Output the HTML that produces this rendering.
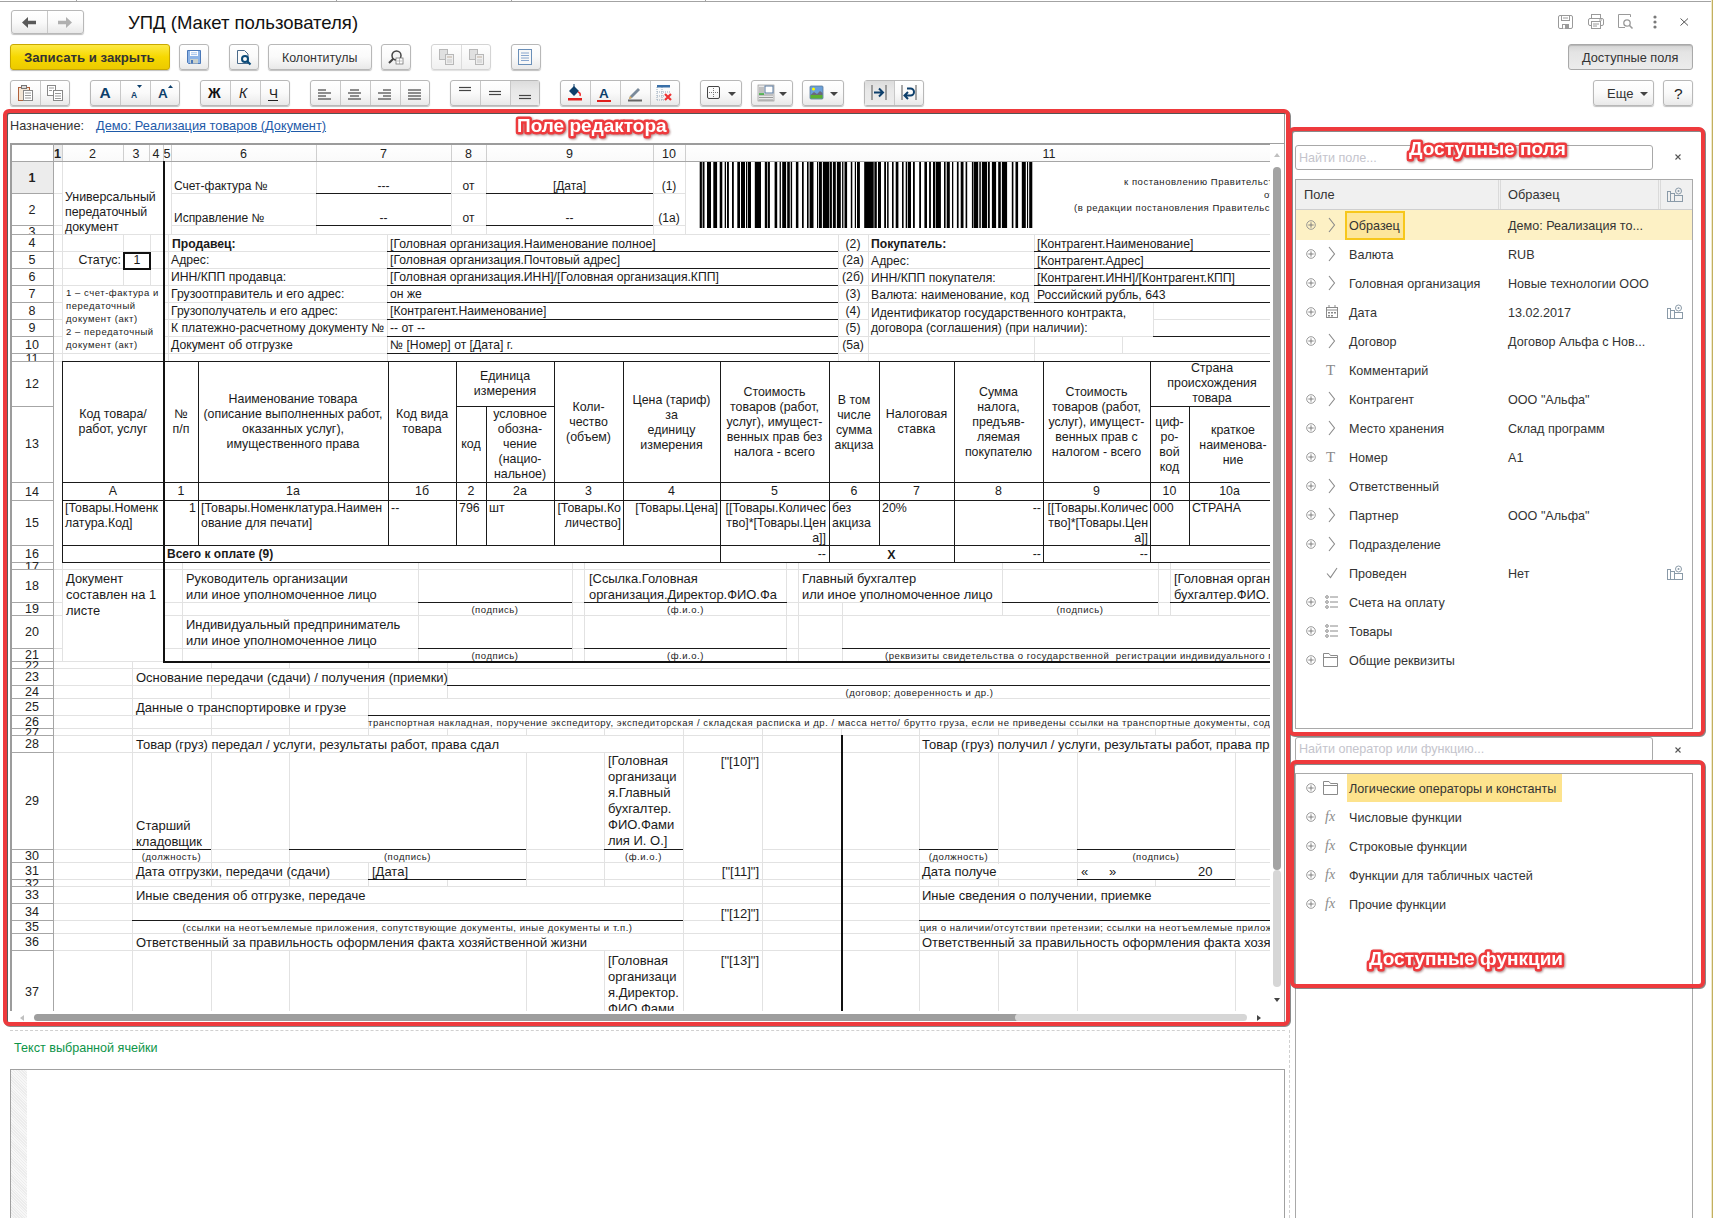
<!DOCTYPE html>
<html><head><meta charset="utf-8"><style>
html,body{margin:0;padding:0;background:#fff;width:1713px;height:1218px;overflow:hidden;position:relative}
div{position:absolute;box-sizing:border-box}
.t{white-space:pre;line-height:1;font-family:"Liberation Sans",sans-serif}
.btn{border:1px solid #b4b4b4;border-radius:2px;background:linear-gradient(#fdfdfd,#ebebeb);box-shadow:0 1px 1px rgba(0,0,0,0.22)}
.lbl{font-family:"Liberation Sans",sans-serif;font-weight:bold;font-size:19px;line-height:1;color:#fff;white-space:pre;
 text-shadow:0 0 1px #e8393d,0 0 1px #e8393d,0 0 2px #e8393d,0 0 2px #e8393d,0 0 2px #e8393d,1px 2px 2px rgba(120,0,0,0.5)}
svg{position:absolute;overflow:visible}
</style></head><body>
<div style="left:0px;top:1px;width:1713px;height:1px;background:#a3a3a3"></div>
<div style="left:76px;top:0px;width:1px;height:1px;background:#a3a3a3"></div>
<div style="left:336px;top:0px;width:1px;height:1px;background:#a3a3a3"></div>
<div style="left:511px;top:0px;width:1px;height:1px;background:#a3a3a3"></div>
<div style="left:705px;top:0px;width:1px;height:1px;background:#a3a3a3"></div>
<div style="left:1711px;top:0px;width:1px;height:1218px;background:#f0e8c8"></div>
<div style="left:1712px;top:0px;width:1px;height:1218px;background:#c2b060"></div>
<div style="left:11px;top:10px;width:73px;height:24px;border:1px solid #b8b8b8;border-radius:3px;background:linear-gradient(#ffffff,#fafafa 50%,#e9e9e9);box-shadow:0 1px 1px rgba(0,0,0,0.25);"></div>
<div style="left:47px;top:11px;width:1px;height:22px;background:#c8c8c8"></div>
<svg style="left:22px;top:17px" width="14" height="11" viewBox="0 0 14 11"><path d="M0 5.5 L6 0 L6 3.8 L14 3.8 L14 7.2 L6 7.2 L6 11 Z" fill="#595959"/></svg>
<svg style="left:58px;top:17px" width="14" height="11" viewBox="0 0 14 11"><path d="M14 5.5 L8 0 L8 3.8 L0 3.8 L0 7.2 L8 7.2 L8 11 Z" fill="#b0b0b0"/></svg>
<div class="t" style="left:128px;top:13.5px;font-size:18.55px;color:#111;">УПД (Макет пользователя)</div>
<svg style="left:1558px;top:15px" width="15" height="14" viewBox="0 0 15 14"><rect x="0.5" y="0.5" width="14" height="13" rx="1.5" fill="none" stroke="#9a9a9a"/><rect x="3.5" y="0.5" width="8" height="5" fill="none" stroke="#9a9a9a"/><line x1="5" y1="3" x2="10" y2="3" stroke="#9a9a9a"/><rect x="4" y="9" width="7" height="4.5" fill="#9a9a9a"/><rect x="5" y="10" width="2" height="3.5" fill="#fff"/></svg>
<svg style="left:1588px;top:14px" width="16" height="15" viewBox="0 0 16 15"><rect x="3.5" y="0.5" width="9" height="4" fill="none" stroke="#9a9a9a"/><rect x="0.5" y="4.5" width="15" height="7" rx="1.5" fill="none" stroke="#9a9a9a"/><rect x="3.5" y="7.5" width="9" height="7" fill="#fff" stroke="#9a9a9a"/><line x1="5" y1="10" x2="11" y2="10" stroke="#9a9a9a"/><line x1="5" y1="12" x2="9" y2="12" stroke="#9a9a9a"/><line x1="11" y1="6" x2="14" y2="6" stroke="#9a9a9a"/></svg>
<svg style="left:1618px;top:14px" width="16" height="15" viewBox="0 0 16 15"><path d="M12.5 3 V0.5 H0.5 V13.5 H7" fill="none" stroke="#9a9a9a"/><circle cx="9" cy="9" r="3.2" fill="none" stroke="#9a9a9a" stroke-width="1.3"/><line x1="11.3" y1="11.3" x2="14.5" y2="14.5" stroke="#9a9a9a" stroke-width="1.6"/></svg>
<svg style="left:1653px;top:15px" width="4" height="14" viewBox="0 0 4 14"><circle cx="2" cy="2" r="1.6" fill="#7a7a7a"/><circle cx="2" cy="7" r="1.6" fill="#7a7a7a"/><circle cx="2" cy="12" r="1.6" fill="#7a7a7a"/></svg>
<svg style="left:1680px;top:18px" width="9" height="8" viewBox="0 0 9 8"><path d="M0.5 0.5 L8 7.5 M8 0.5 L0.5 7.5" stroke="#555" stroke-width="1"/></svg>
<div style="left:10px;top:44px;width:160px;height:26px;border:1px solid #c9a800;border-radius:3px;background:linear-gradient(#fde945,#f6d800 50%,#ecca00);box-shadow:0 1px 1px rgba(0,0,0,0.25)"></div>
<div class="t" style="left:24px;top:51px;font-size:13.2px;color:#333;font-weight:bold">Записать и закрыть</div>
<div style="left:179px;top:44px;width:30px;height:26px;border:1px solid #b8b8b8;border-radius:3px;background:linear-gradient(#ffffff,#fafafa 50%,#e9e9e9);box-shadow:0 1px 1px rgba(0,0,0,0.25);"></div>
<svg style="left:187px;top:50px" width="14" height="14" viewBox="0 0 14 14"><path d="M0.5 0.5 H13.5 V13.5 H1.5 L0.5 12.5 Z" fill="#8db4e6" stroke="#4a78b8"/><rect x="3" y="1" width="8" height="5" fill="#fff"/><line x1="4" y1="2.8" x2="10" y2="2.8" stroke="#8db4e6" stroke-width="0.8"/><line x1="4" y1="4.6" x2="10" y2="4.6" stroke="#8db4e6" stroke-width="0.8"/><rect x="3" y="9" width="8" height="4.5" fill="#c9d0cc"/><rect x="4" y="10" width="2" height="3.5" fill="#4a78b8"/></svg>
<div style="left:229px;top:44px;width:30px;height:26px;border:1px solid #b8b8b8;border-radius:3px;background:linear-gradient(#ffffff,#fafafa 50%,#e9e9e9);box-shadow:0 1px 1px rgba(0,0,0,0.25);"></div>
<svg style="left:237px;top:50px" width="15" height="15" viewBox="0 0 15 15"><path d="M0.5 0.5 H7.5 L11 4 V13.5 H0.5 Z" fill="#fafafa" stroke="#4a6a8a"/><circle cx="8" cy="9" r="3" fill="none" stroke="#0b4a78" stroke-width="2"/><line x1="10" y1="11" x2="13.5" y2="14.5" stroke="#0b4a78" stroke-width="2.2"/></svg>
<div style="left:268px;top:44px;width:104px;height:26px;border:1px solid #b8b8b8;border-radius:3px;background:linear-gradient(#ffffff,#fafafa 50%,#e9e9e9);box-shadow:0 1px 1px rgba(0,0,0,0.25);"></div>
<div class="t" style="left:282px;top:52px;font-size:12.4px;color:#333;">Колонтитулы</div>
<div style="left:381px;top:44px;width:30px;height:26px;border:1px solid #b8b8b8;border-radius:3px;background:linear-gradient(#ffffff,#fafafa 50%,#e9e9e9);box-shadow:0 1px 1px rgba(0,0,0,0.25);"></div>
<svg style="left:388px;top:50px" width="16" height="15" viewBox="0 0 16 15"><circle cx="8.5" cy="5.5" r="4.5" fill="#f4f4f4" stroke="#444" stroke-width="1.5"/><line x1="5.3" y1="8.7" x2="1" y2="13" stroke="#444" stroke-width="2"/><rect x="8" y="8" width="7" height="6" fill="#fff" stroke="#777" stroke-width="0.8"/><line x1="9" y1="11" x2="14" y2="11" stroke="#999" stroke-width="0.6"/><line x1="11.5" y1="8" x2="11.5" y2="14" stroke="#999" stroke-width="0.6"/></svg>
<div style="left:431px;top:44px;width:60px;height:26px;border:1px solid #d4d4d4;border-radius:3px;background:linear-gradient(#ffffff,#f0f0f0);box-shadow:0 1px 1px rgba(0,0,0,0.12)"></div>
<div style="left:461px;top:45px;width:1px;height:24px;background:#dcdcdc"></div>
<svg style="left:439px;top:49px" width="16" height="16" viewBox="0 0 16 16"><rect x="0.5" y="0.5" width="8" height="10" fill="#e0e0e0" stroke="#b8b8b8"/><rect x="6.5" y="5.5" width="8" height="10" fill="#eee" stroke="#b8b8b8"/><line x1="8" y1="8" x2="13" y2="8" stroke="#c0b0a0"/><line x1="8" y1="11" x2="13" y2="11" stroke="#c8c8c8"/><line x1="8" y1="13" x2="13" y2="13" stroke="#c8c8c8"/></svg>
<svg style="left:469px;top:49px" width="16" height="16" viewBox="0 0 16 16"><rect x="0.5" y="0.5" width="8" height="10" fill="#e0e0e0" stroke="#b8b8b8"/><rect x="6.5" y="5.5" width="8" height="10" fill="#eee" stroke="#b8b8b8"/><line x1="8" y1="8" x2="13" y2="8" stroke="#c0b0a0"/><line x1="8" y1="11" x2="13" y2="11" stroke="#c8c8c8"/><line x1="8" y1="13" x2="13" y2="13" stroke="#c8c8c8"/></svg>
<div style="left:511px;top:44px;width:30px;height:26px;border:1px solid #b8b8b8;border-radius:3px;background:linear-gradient(#ffffff,#fafafa 50%,#e9e9e9);box-shadow:0 1px 1px rgba(0,0,0,0.25);"></div>
<svg style="left:518px;top:49px" width="15" height="16" viewBox="0 0 15 16"><rect x="0.5" y="0.5" width="13" height="15" fill="#f8f8f8" stroke="#6a8fb8"/><g stroke="#7a9cc8" stroke-width="0.9"><line x1="3" y1="4" x2="11" y2="4"/><line x1="3" y1="6.5" x2="11" y2="6.5"/><line x1="3" y1="9" x2="11" y2="9"/><line x1="3" y1="11.5" x2="11" y2="11.5"/></g></svg>
<div style="left:1568px;top:44px;width:125px;height:26px;border:1px solid #a9a9a9;border-radius:3px;background:linear-gradient(#d4d4d4,#e4e4e4 30%,#ececec);box-shadow:inset 0 1px 1px rgba(0,0,0,0.15)"></div>
<div class="t" style="left:1582px;top:52px;font-size:12.75px;color:#333;">Доступные поля</div>
<div style="left:1593px;top:80px;width:61px;height:26px;border:1px solid #b8b8b8;border-radius:3px;background:linear-gradient(#ffffff,#fafafa 50%,#e9e9e9);box-shadow:0 1px 1px rgba(0,0,0,0.25);"></div>
<div class="t" style="left:1607px;top:87px;font-size:13px;color:#333;">Еще</div>
<svg style="left:1640px;top:92px" width="8" height="4" viewBox="0 0 8 4"><path d="M0 0 H8 L4 4 Z" fill="#444"/></svg>
<div style="left:1663px;top:80px;width:30px;height:26px;border:1px solid #b8b8b8;border-radius:3px;background:linear-gradient(#ffffff,#fafafa 50%,#e9e9e9);box-shadow:0 1px 1px rgba(0,0,0,0.25);"></div>
<div class="t" style="left:1674px;top:86px;font-size:15.5px;color:#222;">?</div>
<div style="left:10px;top:80px;width:60px;height:26px;border:1px solid #b8b8b8;border-radius:3px;background:linear-gradient(#ffffff,#fafafa 50%,#e9e9e9);box-shadow:0 1px 1px rgba(0,0,0,0.25);"></div>
<div style="left:40px;top:81px;width:1px;height:24px;background:#c8c8c8"></div>
<svg style="left:18px;top:85px" width="15" height="16" viewBox="0 0 15 16"><rect x="0.5" y="2.5" width="11" height="13" fill="#f3e6d6" stroke="#b0603a"/><rect x="3.5" y="0.5" width="5" height="3" fill="#ddd" stroke="#777"/><rect x="5.5" y="5.5" width="9" height="10" fill="#fff" stroke="#888"/><g stroke="#999"><line x1="7" y1="8" x2="13" y2="8"/><line x1="7" y1="10.5" x2="13" y2="10.5"/><line x1="7" y1="13" x2="13" y2="13"/></g></svg>
<svg style="left:47px;top:85px" width="16" height="16" viewBox="0 0 16 16"><rect x="0.5" y="0.5" width="8" height="10" fill="#fff" stroke="#888"/><rect x="6.5" y="5.5" width="9" height="10" fill="#fff" stroke="#888"/><g stroke="#999"><line x1="2" y1="3" x2="7" y2="3"/><line x1="2" y1="5.5" x2="5" y2="5.5"/><line x1="8" y1="8.5" x2="14" y2="8.5"/><line x1="8" y1="11" x2="14" y2="11"/><line x1="8" y1="13.5" x2="14" y2="13.5"/></g></svg>
<div style="left:90px;top:80px;width:90px;height:26px;border:1px solid #b8b8b8;border-radius:3px;background:linear-gradient(#ffffff,#fafafa 50%,#e9e9e9);box-shadow:0 1px 1px rgba(0,0,0,0.25);"></div>
<div style="left:120px;top:81px;width:1px;height:24px;background:#c8c8c8"></div>
<div style="left:150px;top:81px;width:1px;height:24px;background:#c8c8c8"></div>
<div class="t" style="left:99.5px;top:85px;font-size:15.5px;color:#0d3f6b;font-weight:bold">A</div>
<div class="t" style="left:131px;top:91px;font-size:8.5px;color:#0d3f6b;font-weight:bold">A</div>
<svg style="left:137px;top:85px" width="5" height="3" viewBox="0 0 5 3"><path d="M0 0 H5 L2.5 3 Z" fill="#0d3f6b"/></svg>
<div class="t" style="left:158px;top:87px;font-size:13.5px;color:#0d3f6b;font-weight:bold">A</div>
<svg style="left:167.5px;top:85px" width="5" height="3" viewBox="0 0 5 3"><path d="M0 3 H5 L2.5 0 Z" fill="#0d3f6b"/></svg>
<div style="left:200px;top:80px;width:90px;height:26px;border:1px solid #b8b8b8;border-radius:3px;background:linear-gradient(#ffffff,#fafafa 50%,#e9e9e9);box-shadow:0 1px 1px rgba(0,0,0,0.25);"></div>
<div style="left:230px;top:81px;width:1px;height:24px;background:#c8c8c8"></div>
<div style="left:260px;top:81px;width:1px;height:24px;background:#c8c8c8"></div>
<div class="t" style="left:208px;top:86px;font-size:14px;color:#111;font-weight:bold">Ж</div>
<div class="t" style="left:239px;top:86px;font-size:14px;color:#222;font-style:italic">К</div>
<div class="t" style="left:269px;top:87px;font-size:13.5px;color:#222;">Ч</div>
<div style="left:268px;top:99.5px;width:10px;height:1px;background:#222"></div>
<div style="left:310px;top:80px;width:120px;height:26px;border:1px solid #b8b8b8;border-radius:3px;background:linear-gradient(#ffffff,#fafafa 50%,#e9e9e9);box-shadow:0 1px 1px rgba(0,0,0,0.25);"></div>
<div style="left:340px;top:81px;width:1px;height:24px;background:#c8c8c8"></div>
<div style="left:370px;top:81px;width:1px;height:24px;background:#c8c8c8"></div>
<div style="left:400px;top:81px;width:1px;height:24px;background:#c8c8c8"></div>
<svg style="left:318px;top:86px" width="14" height="14" viewBox="0 0 14 14"><line x1="0" y1="4" x2="8" y2="4" stroke="#444" stroke-width="1.2"/><line x1="0" y1="7" x2="13" y2="7" stroke="#444" stroke-width="1.2"/><line x1="0" y1="10" x2="8" y2="10" stroke="#444" stroke-width="1.2"/><line x1="0" y1="13" x2="13" y2="13" stroke="#444" stroke-width="1.2"/></svg>
<svg style="left:348px;top:86px" width="14" height="14" viewBox="0 0 14 14"><line x1="2" y1="4" x2="11" y2="4" stroke="#444" stroke-width="1.2"/><line x1="0" y1="7" x2="13" y2="7" stroke="#444" stroke-width="1.2"/><line x1="2" y1="10" x2="11" y2="10" stroke="#444" stroke-width="1.2"/><line x1="0" y1="13" x2="13" y2="13" stroke="#444" stroke-width="1.2"/></svg>
<svg style="left:378px;top:86px" width="14" height="14" viewBox="0 0 14 14"><line x1="5" y1="4" x2="13" y2="4" stroke="#444" stroke-width="1.2"/><line x1="0" y1="7" x2="13" y2="7" stroke="#444" stroke-width="1.2"/><line x1="5" y1="10" x2="13" y2="10" stroke="#444" stroke-width="1.2"/><line x1="0" y1="13" x2="13" y2="13" stroke="#444" stroke-width="1.2"/></svg>
<svg style="left:408px;top:86px" width="14" height="14" viewBox="0 0 14 14"><line x1="0" y1="4" x2="13" y2="4" stroke="#444" stroke-width="1.2"/><line x1="0" y1="7" x2="13" y2="7" stroke="#444" stroke-width="1.2"/><line x1="0" y1="10" x2="13" y2="10" stroke="#444" stroke-width="1.2"/><line x1="0" y1="13" x2="13" y2="13" stroke="#444" stroke-width="1.2"/></svg>
<div style="left:450px;top:80px;width:90px;height:26px;border:1px solid #b8b8b8;border-radius:3px;background:linear-gradient(#ffffff,#fafafa 50%,#e9e9e9);box-shadow:0 1px 1px rgba(0,0,0,0.25);"></div>
<div style="left:511px;top:81px;width:28px;height:24px;background:linear-gradient(#dcdcdc,#e8e8e8 40%,#ececec)"></div>
<div style="left:480px;top:81px;width:1px;height:24px;background:#c8c8c8"></div>
<div style="left:510px;top:81px;width:1px;height:24px;background:#c8c8c8"></div>
<svg style="left:458px;top:85px" width="14" height="16" viewBox="0 0 14 16"><line x1="1" y1="2.5" x2="13" y2="2.5" stroke="#444" stroke-width="1.2"/><line x1="1" y1="5.5" x2="13" y2="5.5" stroke="#444" stroke-width="1.2"/></svg>
<svg style="left:488px;top:85px" width="14" height="16" viewBox="0 0 14 16"><line x1="1" y1="6.5" x2="13" y2="6.5" stroke="#444" stroke-width="1.2"/><line x1="1" y1="9.5" x2="13" y2="9.5" stroke="#444" stroke-width="1.2"/></svg>
<svg style="left:518px;top:85px" width="14" height="16" viewBox="0 0 14 16"><line x1="1" y1="10.5" x2="13" y2="10.5" stroke="#444" stroke-width="1.2"/><line x1="1" y1="13.5" x2="13" y2="13.5" stroke="#444" stroke-width="1.2"/></svg>
<div style="left:560px;top:80px;width:120px;height:26px;border:1px solid #b8b8b8;border-radius:3px;background:linear-gradient(#ffffff,#fafafa 50%,#e9e9e9);box-shadow:0 1px 1px rgba(0,0,0,0.25);"></div>
<div style="left:590px;top:81px;width:1px;height:24px;background:#c8c8c8"></div>
<div style="left:620px;top:81px;width:1px;height:24px;background:#c8c8c8"></div>
<div style="left:650px;top:81px;width:1px;height:24px;background:#c8c8c8"></div>
<svg style="left:567px;top:84px" width="16" height="18" viewBox="0 0 16 18"><path d="M2 7 L7 2 L12 7 L7 12 Z" fill="#0d3f6b"/><line x1="7" y1="0" x2="7" y2="5" stroke="#0d3f6b"/><path d="M11 8 Q14 9 13 12" fill="none" stroke="#e33" stroke-width="1.5"/><rect x="1" y="14" width="14" height="2.5" fill="#e0201e"/></svg>
<div class="t" style="left:599px;top:87px;font-size:13.5px;color:#0d3f6b;font-weight:bold">A</div>
<div style="left:597px;top:100px;width:14px;height:2px;background:#e0201e"></div>
<svg style="left:627px;top:85px" width="16" height="17" viewBox="0 0 16 17"><path d="M3 11 L11 3 L13 5 L5 13 L2 14 Z" fill="#7a8a9a"/><path d="M3 11 L5 13 L2 14 Z" fill="#e0b060"/><rect x="1" y="14.5" width="14" height="2" fill="#666"/></svg>
<svg style="left:656px;top:84px" width="17" height="18" viewBox="0 0 17 18"><g stroke="#9ab" stroke-width="1" stroke-dasharray="1,1"><line x1="1" y1="3" x2="1" y2="16"/><line x1="6" y1="3" x2="6" y2="16"/><line x1="1" y1="8" x2="14" y2="8"/><line x1="1" y1="12" x2="8" y2="12"/><line x1="1" y1="16" x2="8" y2="16"/></g><rect x="1" y="1" width="13" height="2.5" fill="#3a70a8"/><path d="M9 10 L15 16 M15 10 L9 16" stroke="#e33" stroke-width="2.2"/></svg>
<div style="left:700px;top:80px;width:42px;height:26px;border:1px solid #b8b8b8;border-radius:3px;background:linear-gradient(#ffffff,#fafafa 50%,#e9e9e9);box-shadow:0 1px 1px rgba(0,0,0,0.25);"></div>
<svg style="left:707px;top:86px" width="13" height="13" viewBox="0 0 13 13"><rect x="0.5" y="0.5" width="12" height="12" rx="1.5" fill="none" stroke="#444"/><g stroke="#777" stroke-dasharray="1,1"><line x1="6.5" y1="2" x2="6.5" y2="11"/><line x1="2" y1="6.5" x2="11" y2="6.5"/></g></svg>
<svg style="left:728px;top:92px" width="8" height="4" viewBox="0 0 8 4"><path d="M0 0 H8 L4 4 Z" fill="#444"/></svg>
<div style="left:751px;top:80px;width:42px;height:26px;border:1px solid #b8b8b8;border-radius:3px;background:linear-gradient(#ffffff,#fafafa 50%,#e9e9e9);box-shadow:0 1px 1px rgba(0,0,0,0.25);"></div>
<svg style="left:758px;top:85px" width="16" height="16" viewBox="0 0 16 16"><rect x="0" y="0" width="16" height="16" fill="#e8e8e8" stroke="#888" stroke-width="0.6"/><rect x="7" y="1" width="8" height="7" fill="#fff" stroke="#5a7aa0"/><g stroke="#999"><line x1="1" y1="3" x2="6" y2="3"/><line x1="1" y1="5" x2="6" y2="5"/><line x1="1" y1="7" x2="6" y2="7"/><line x1="1" y1="10" x2="15" y2="10"/><line x1="1" y1="12.5" x2="15" y2="12.5"/><line x1="1" y1="15" x2="15" y2="15"/></g><line x1="1" y1="9" x2="6" y2="9" stroke="#3a3" stroke-width="1.5"/></svg>
<svg style="left:779px;top:92px" width="8" height="4" viewBox="0 0 8 4"><path d="M0 0 H8 L4 4 Z" fill="#444"/></svg>
<div style="left:802px;top:80px;width:42px;height:26px;border:1px solid #b8b8b8;border-radius:3px;background:linear-gradient(#ffffff,#fafafa 50%,#e9e9e9);box-shadow:0 1px 1px rgba(0,0,0,0.25);"></div>
<svg style="left:810px;top:86px" width="13" height="13" viewBox="0 0 13 13"><rect x="0" y="0" width="13" height="13" rx="1" fill="#6aa0d8" stroke="#5a7a9a" stroke-width="0.8"/><rect x="0.5" y="9" width="12" height="3.5" fill="#5cb030"/><path d="M0.5 9 L4 6 L7 8 L10 5 L12.5 7 V9 Z" fill="#6a6a7a"/><circle cx="3.5" cy="3" r="1.5" fill="#ff0"/></svg>
<svg style="left:830px;top:92px" width="8" height="4" viewBox="0 0 8 4"><path d="M0 0 H8 L4 4 Z" fill="#444"/></svg>
<div style="left:864px;top:80px;width:60px;height:26px;border:1px solid #b8b8b8;border-radius:3px;background:linear-gradient(#ffffff,#fafafa 50%,#e9e9e9);box-shadow:0 1px 1px rgba(0,0,0,0.25);"></div>
<div style="left:865px;top:81px;width:29px;height:24px;background:linear-gradient(#dcdcdc,#e8e8e8 40%,#ececec)"></div>
<div style="left:894px;top:81px;width:1px;height:24px;background:#c8c8c8"></div>
<svg style="left:871px;top:85px" width="16" height="15" viewBox="0 0 16 15"><line x1="1" y1="0" x2="1" y2="15" stroke="#555"/><line x1="15" y1="0" x2="15" y2="15" stroke="#555"/><path d="M3 7.5 H12 M8 3.5 L12 7.5 L8 11.5" fill="none" stroke="#0d3f6b" stroke-width="2"/></svg>
<svg style="left:901px;top:85px" width="16" height="15" viewBox="0 0 16 15"><line x1="1" y1="0" x2="1" y2="15" stroke="#555"/><line x1="15" y1="0" x2="15" y2="15" stroke="#555"/><path d="M6 3.5 H9.5 A3.5 3.5 0 0 1 9.5 10.5 H4 M7 7 L3.5 10.5 L7 14" fill="none" stroke="#0d3f6b" stroke-width="2"/></svg>
<div style="left:7px;top:113px;width:1278px;height:910px;border:1px solid #9a9a9a;border-top:1px solid #8a8a8a"></div>
<div class="t" style="left:10px;top:120px;font-size:12.7px;color:#333;">Назначение:</div>
<div class="t" style="left:96px;top:120px;font-size:12.8px;color:#1e5aa8;text-decoration:underline">Демо: Реализация товаров (Документ)</div>
<div style="left:10px;top:1030px;width:1275px;height:0;border-top:1px dashed #d0d0d0"></div>
<div style="left:1289px;top:1030px;width:0;height:188px;border-left:1px dashed #d0d0d0"></div>
<div class="t" style="left:14px;top:1042px;font-size:12.6px;color:#0d9448;">Текст выбранной ячейки</div>
<div style="left:10px;top:1069px;width:1275px;height:160px;border:1px solid #a0a0a0"></div>
<div style="left:11px;top:1070px;width:16px;height:160px;background:repeating-linear-gradient(45deg,#ececec 0 1px,#f7f7f7 1px 2px)"></div>
<div style="left:0;top:0;width:1713px;height:1218px;clip-path:inset(143px 443px 207px 10px)">
<div style="left:62px;top:161px;width:1px;height:73px;background:#e2e2e2"></div>
<div style="left:171px;top:161px;width:1px;height:73px;background:#e2e2e2"></div>
<div style="left:316px;top:161px;width:1px;height:73px;background:#e2e2e2"></div>
<div style="left:451px;top:161px;width:1px;height:73px;background:#e2e2e2"></div>
<div style="left:486px;top:161px;width:1px;height:73px;background:#e2e2e2"></div>
<div style="left:653px;top:161px;width:1px;height:73px;background:#e2e2e2"></div>
<div style="left:685px;top:161px;width:1px;height:73px;background:#e2e2e2"></div>
<div style="left:53px;top:193px;width:9px;height:1px;background:#e2e2e2"></div>
<div style="left:53px;top:225px;width:9px;height:1px;background:#e2e2e2"></div>
<div style="left:171px;top:193px;width:514px;height:1px;background:#e2e2e2"></div>
<div style="left:171px;top:225px;width:514px;height:1px;background:#e2e2e2"></div>
<div style="left:53px;top:234px;width:1217px;height:1px;background:#e2e2e2"></div>
<div style="left:53px;top:251px;width:1217px;height:1px;background:#e2e2e2"></div>
<div style="left:53px;top:268px;width:1217px;height:1px;background:#e2e2e2"></div>
<div style="left:53px;top:285px;width:1217px;height:1px;background:#e2e2e2"></div>
<div style="left:53px;top:302px;width:9px;height:1px;background:#e2e2e2"></div>
<div style="left:164px;top:302px;width:1106px;height:1px;background:#e2e2e2"></div>
<div style="left:53px;top:319px;width:9px;height:1px;background:#e2e2e2"></div>
<div style="left:164px;top:319px;width:704px;height:1px;background:#e2e2e2"></div>
<div style="left:1153px;top:319px;width:117px;height:1px;background:#e2e2e2"></div>
<div style="left:53px;top:336px;width:9px;height:1px;background:#e2e2e2"></div>
<div style="left:164px;top:336px;width:1106px;height:1px;background:#e2e2e2"></div>
<div style="left:53px;top:353px;width:1217px;height:1px;background:#e2e2e2"></div>
<div style="left:53px;top:361px;width:1217px;height:1px;background:#e2e2e2"></div>
<div style="left:62px;top:234px;width:1px;height:127px;background:#e2e2e2"></div>
<div style="left:168px;top:234px;width:1px;height:127px;background:#e2e2e2"></div>
<div style="left:387px;top:234px;width:1px;height:127px;background:#e2e2e2"></div>
<div style="left:838px;top:234px;width:1px;height:127px;background:#e2e2e2"></div>
<div style="left:868px;top:234px;width:1px;height:127px;background:#e2e2e2"></div>
<div style="left:1034px;top:234px;width:1px;height:68px;background:#e2e2e2"></div>
<div style="left:1034px;top:336px;width:1px;height:25px;background:#e2e2e2"></div>
<div style="left:123px;top:234px;width:1px;height:51px;background:#e2e2e2"></div>
<div style="left:150px;top:234px;width:1px;height:51px;background:#e2e2e2"></div>
<div style="left:1122px;top:336px;width:1px;height:17px;background:#e2e2e2"></div>
<div style="left:1153px;top:302px;width:1px;height:34px;background:#e2e2e2"></div>
<div style="left:62px;top:562px;width:1px;height:99px;background:#e2e2e2"></div>
<div style="left:182px;top:562px;width:1px;height:99px;background:#e2e2e2"></div>
<div style="left:418px;top:562px;width:1px;height:99px;background:#e2e2e2"></div>
<div style="left:572px;top:562px;width:1px;height:99px;background:#e2e2e2"></div>
<div style="left:584px;top:562px;width:1px;height:99px;background:#e2e2e2"></div>
<div style="left:786px;top:562px;width:1px;height:99px;background:#e2e2e2"></div>
<div style="left:798px;top:562px;width:1px;height:99px;background:#e2e2e2"></div>
<div style="left:1002px;top:562px;width:1px;height:53px;background:#e2e2e2"></div>
<div style="left:1158px;top:562px;width:1px;height:53px;background:#e2e2e2"></div>
<div style="left:1170px;top:562px;width:1px;height:53px;background:#e2e2e2"></div>
<div style="left:842px;top:602px;width:1px;height:59px;background:#e2e2e2"></div>
<div style="left:53px;top:569px;width:1217px;height:1px;background:#e2e2e2"></div>
<div style="left:53px;top:602px;width:9px;height:1px;background:#e2e2e2"></div>
<div style="left:164px;top:602px;width:1106px;height:1px;background:#e2e2e2"></div>
<div style="left:53px;top:615px;width:9px;height:1px;background:#e2e2e2"></div>
<div style="left:164px;top:615px;width:1106px;height:1px;background:#e2e2e2"></div>
<div style="left:53px;top:648px;width:9px;height:1px;background:#e2e2e2"></div>
<div style="left:164px;top:648px;width:1106px;height:1px;background:#e2e2e2"></div>
<div style="left:53px;top:661px;width:111px;height:1px;background:#e2e2e2"></div>
<div style="left:53px;top:668px;width:1217px;height:1px;background:#e2e2e2"></div>
<div style="left:53px;top:685px;width:1217px;height:1px;background:#e2e2e2"></div>
<div style="left:53px;top:698px;width:1217px;height:1px;background:#e2e2e2"></div>
<div style="left:53px;top:715px;width:1217px;height:1px;background:#e2e2e2"></div>
<div style="left:53px;top:728px;width:1217px;height:1px;background:#e2e2e2"></div>
<div style="left:53px;top:735px;width:1217px;height:1px;background:#e2e2e2"></div>
<div style="left:53px;top:752px;width:1217px;height:1px;background:#e2e2e2"></div>
<div style="left:53px;top:849px;width:1217px;height:1px;background:#e2e2e2"></div>
<div style="left:53px;top:862px;width:1217px;height:1px;background:#e2e2e2"></div>
<div style="left:53px;top:879px;width:1217px;height:1px;background:#e2e2e2"></div>
<div style="left:53px;top:886px;width:1217px;height:1px;background:#e2e2e2"></div>
<div style="left:53px;top:903px;width:1217px;height:1px;background:#e2e2e2"></div>
<div style="left:53px;top:920px;width:1217px;height:1px;background:#e2e2e2"></div>
<div style="left:53px;top:933px;width:1217px;height:1px;background:#e2e2e2"></div>
<div style="left:53px;top:950px;width:1217px;height:1px;background:#e2e2e2"></div>
<div style="left:53px;top:1040px;width:1217px;height:1px;background:#e2e2e2"></div>
<div style="left:132px;top:661px;width:1px;height:91px;background:#e2e2e2"></div>
<div style="left:211px;top:661px;width:1px;height:7px;background:#e2e2e2"></div>
<div style="left:211px;top:685px;width:1px;height:13px;background:#e2e2e2"></div>
<div style="left:211px;top:715px;width:1px;height:20px;background:#e2e2e2"></div>
<div style="left:289px;top:661px;width:1px;height:7px;background:#e2e2e2"></div>
<div style="left:289px;top:685px;width:1px;height:13px;background:#e2e2e2"></div>
<div style="left:289px;top:715px;width:1px;height:20px;background:#e2e2e2"></div>
<div style="left:368px;top:661px;width:1px;height:7px;background:#e2e2e2"></div>
<div style="left:368px;top:685px;width:1px;height:50px;background:#e2e2e2"></div>
<div style="left:447px;top:661px;width:1px;height:37px;background:#e2e2e2"></div>
<div style="left:447px;top:728px;width:1px;height:7px;background:#e2e2e2"></div>
<div style="left:132px;top:728px;width:1px;height:7px;background:#e2e2e2"></div>
<div style="left:211px;top:728px;width:1px;height:7px;background:#e2e2e2"></div>
<div style="left:289px;top:728px;width:1px;height:7px;background:#e2e2e2"></div>
<div style="left:368px;top:728px;width:1px;height:7px;background:#e2e2e2"></div>
<div style="left:447px;top:728px;width:1px;height:7px;background:#e2e2e2"></div>
<div style="left:526px;top:728px;width:1px;height:7px;background:#e2e2e2"></div>
<div style="left:604px;top:728px;width:1px;height:7px;background:#e2e2e2"></div>
<div style="left:683px;top:728px;width:1px;height:7px;background:#e2e2e2"></div>
<div style="left:762px;top:728px;width:1px;height:7px;background:#e2e2e2"></div>
<div style="left:841px;top:728px;width:1px;height:7px;background:#e2e2e2"></div>
<div style="left:919px;top:728px;width:1px;height:7px;background:#e2e2e2"></div>
<div style="left:998px;top:728px;width:1px;height:7px;background:#e2e2e2"></div>
<div style="left:1077px;top:728px;width:1px;height:7px;background:#e2e2e2"></div>
<div style="left:1155px;top:728px;width:1px;height:7px;background:#e2e2e2"></div>
<div style="left:1235px;top:728px;width:1px;height:7px;background:#e2e2e2"></div>
<div style="left:683px;top:735px;width:1px;height:17px;background:#e2e2e2"></div>
<div style="left:762px;top:735px;width:1px;height:17px;background:#e2e2e2"></div>
<div style="left:919px;top:735px;width:1px;height:17px;background:#e2e2e2"></div>
<div style="left:132px;top:752px;width:1px;height:259px;background:#e2e2e2"></div>
<div style="left:211px;top:752px;width:1px;height:259px;background:#e2e2e2"></div>
<div style="left:289px;top:752px;width:1px;height:259px;background:#e2e2e2"></div>
<div style="left:526px;top:752px;width:1px;height:259px;background:#e2e2e2"></div>
<div style="left:604px;top:752px;width:1px;height:259px;background:#e2e2e2"></div>
<div style="left:683px;top:752px;width:1px;height:259px;background:#e2e2e2"></div>
<div style="left:762px;top:752px;width:1px;height:259px;background:#e2e2e2"></div>
<div style="left:919px;top:752px;width:1px;height:259px;background:#e2e2e2"></div>
<div style="left:998px;top:752px;width:1px;height:259px;background:#e2e2e2"></div>
<div style="left:1077px;top:752px;width:1px;height:259px;background:#e2e2e2"></div>
<div style="left:1235px;top:752px;width:1px;height:259px;background:#e2e2e2"></div>
<div style="left:368px;top:862px;width:1px;height:24px;background:#e2e2e2"></div>
<div style="left:447px;top:879px;width:1px;height:7px;background:#e2e2e2"></div>
<div style="left:1155px;top:879px;width:1px;height:7px;background:#e2e2e2"></div>
<div style="left:134px;top:736px;width:549px;height:16px;background:#fff"></div>
<div style="left:921px;top:736px;width:349px;height:16px;background:#fff"></div>
<div style="left:134px;top:887px;width:549px;height:16px;background:#fff"></div>
<div style="left:921px;top:887px;width:349px;height:16px;background:#fff"></div>
<div style="left:134px;top:904px;width:549px;height:16px;background:#fff"></div>
<div style="left:921px;top:904px;width:349px;height:16px;background:#fff"></div>
<div style="left:134px;top:934px;width:549px;height:16px;background:#fff"></div>
<div style="left:921px;top:934px;width:349px;height:16px;background:#fff"></div>
<div style="left:134px;top:921px;width:549px;height:12px;background:#fff"></div>
<div style="left:921px;top:921px;width:349px;height:12px;background:#fff"></div>
<div style="left:684px;top:849px;width:78px;height:1px;background:#fff"></div>
<div style="left:53px;top:144px;width:1217px;height:17px;background:linear-gradient(#fff,#fafafa)"></div>
<div style="left:53px;top:144px;width:9px;height:17px;background:#ececec"></div>
<div style="left:11px;top:161px;width:42px;height:32px;background:#ececec"></div>
<div style="left:10px;top:143px;width:1260px;height:2px;background:#9c9c9c"></div>
<div style="left:10px;top:143px;width:2px;height:868px;background:#9c9c9c"></div>
<div style="left:12px;top:161px;width:1258px;height:1px;background:#a6a6a6"></div>
<div style="left:53px;top:143px;width:1px;height:868px;background:#a6a6a6"></div>
<div style="left:62px;top:145px;width:1px;height:16px;background:#cfcfcf"></div>
<div style="left:123px;top:145px;width:1px;height:16px;background:#cfcfcf"></div>
<div style="left:149px;top:145px;width:1px;height:16px;background:#cfcfcf"></div>
<div style="left:163px;top:145px;width:1px;height:16px;background:#cfcfcf"></div>
<div style="left:171px;top:145px;width:1px;height:16px;background:#cfcfcf"></div>
<div style="left:316px;top:145px;width:1px;height:16px;background:#cfcfcf"></div>
<div style="left:451px;top:145px;width:1px;height:16px;background:#cfcfcf"></div>
<div style="left:486px;top:145px;width:1px;height:16px;background:#cfcfcf"></div>
<div style="left:653px;top:145px;width:1px;height:16px;background:#cfcfcf"></div>
<div style="left:685px;top:145px;width:1px;height:16px;background:#cfcfcf"></div>
<div class="t" style="left:53px;top:148px;font-size:12.5px;color:#222;width:9px;text-align:center;font-weight:bold">1</div>
<div class="t" style="left:62px;top:148px;font-size:12.5px;color:#222;width:61px;text-align:center;">2</div>
<div class="t" style="left:123px;top:148px;font-size:12.5px;color:#222;width:26px;text-align:center;">3</div>
<div class="t" style="left:149px;top:148px;font-size:12.5px;color:#222;width:14px;text-align:center;">4</div>
<div class="t" style="left:163px;top:148px;font-size:12.5px;color:#222;width:8px;text-align:center;">5</div>
<div class="t" style="left:171px;top:148px;font-size:12.5px;color:#222;width:145px;text-align:center;">6</div>
<div class="t" style="left:316px;top:148px;font-size:12.5px;color:#222;width:135px;text-align:center;">7</div>
<div class="t" style="left:451px;top:148px;font-size:12.5px;color:#222;width:35px;text-align:center;">8</div>
<div class="t" style="left:486px;top:148px;font-size:12.5px;color:#222;width:167px;text-align:center;">9</div>
<div class="t" style="left:653px;top:148px;font-size:12.5px;color:#222;width:32px;text-align:center;">10</div>
<div class="t" style="left:685px;top:148px;font-size:12.5px;color:#222;width:728px;text-align:center;">11</div>
<div style="left:12px;top:193px;width:41px;height:1px;background:#a6a6a6"></div>
<div class="t" style="left:11px;top:172px;font-size:12.5px;color:#222;width:42px;text-align:center;font-weight:bold">1</div>
<div style="left:12px;top:225px;width:41px;height:1px;background:#a6a6a6"></div>
<div class="t" style="left:11px;top:204px;font-size:12.5px;color:#222;width:42px;text-align:center;">2</div>
<div style="left:12px;top:234px;width:41px;height:1px;background:#a6a6a6"></div>
<div class="t" style="left:11px;top:226px;font-size:12.5px;color:#222;width:42px;text-align:center;">3</div>
<div style="left:12px;top:251px;width:41px;height:1px;background:#a6a6a6"></div>
<div class="t" style="left:11px;top:237px;font-size:12.5px;color:#222;width:42px;text-align:center;">4</div>
<div style="left:12px;top:268px;width:41px;height:1px;background:#a6a6a6"></div>
<div class="t" style="left:11px;top:254px;font-size:12.5px;color:#222;width:42px;text-align:center;">5</div>
<div style="left:12px;top:285px;width:41px;height:1px;background:#a6a6a6"></div>
<div class="t" style="left:11px;top:271px;font-size:12.5px;color:#222;width:42px;text-align:center;">6</div>
<div style="left:12px;top:302px;width:41px;height:1px;background:#a6a6a6"></div>
<div class="t" style="left:11px;top:288px;font-size:12.5px;color:#222;width:42px;text-align:center;">7</div>
<div style="left:12px;top:319px;width:41px;height:1px;background:#a6a6a6"></div>
<div class="t" style="left:11px;top:305px;font-size:12.5px;color:#222;width:42px;text-align:center;">8</div>
<div style="left:12px;top:336px;width:41px;height:1px;background:#a6a6a6"></div>
<div class="t" style="left:11px;top:322px;font-size:12.5px;color:#222;width:42px;text-align:center;">9</div>
<div style="left:12px;top:353px;width:41px;height:1px;background:#a6a6a6"></div>
<div class="t" style="left:11px;top:339px;font-size:12.5px;color:#222;width:42px;text-align:center;">10</div>
<div style="left:12px;top:361px;width:41px;height:1px;background:#a6a6a6"></div>
<div class="t" style="left:11px;top:353px;font-size:12.5px;color:#222;width:42px;text-align:center;">11</div>
<div style="left:12px;top:406px;width:41px;height:1px;background:#a6a6a6"></div>
<div class="t" style="left:11px;top:378px;font-size:12.5px;color:#222;width:42px;text-align:center;">12</div>
<div style="left:12px;top:482px;width:41px;height:1px;background:#a6a6a6"></div>
<div class="t" style="left:11px;top:438px;font-size:12.5px;color:#222;width:42px;text-align:center;">13</div>
<div style="left:12px;top:500px;width:41px;height:1px;background:#a6a6a6"></div>
<div class="t" style="left:11px;top:486px;font-size:12.5px;color:#222;width:42px;text-align:center;">14</div>
<div style="left:12px;top:545px;width:41px;height:1px;background:#a6a6a6"></div>
<div class="t" style="left:11px;top:517px;font-size:12.5px;color:#222;width:42px;text-align:center;">15</div>
<div style="left:12px;top:562px;width:41px;height:1px;background:#a6a6a6"></div>
<div class="t" style="left:11px;top:548px;font-size:12.5px;color:#222;width:42px;text-align:center;">16</div>
<div style="left:12px;top:569px;width:41px;height:1px;background:#a6a6a6"></div>
<div class="t" style="left:11px;top:561px;font-size:12.5px;color:#222;width:42px;text-align:center;">17</div>
<div style="left:12px;top:602px;width:41px;height:1px;background:#a6a6a6"></div>
<div class="t" style="left:11px;top:580px;font-size:12.5px;color:#222;width:42px;text-align:center;">18</div>
<div style="left:12px;top:615px;width:41px;height:1px;background:#a6a6a6"></div>
<div class="t" style="left:11px;top:603px;font-size:12.5px;color:#222;width:42px;text-align:center;">19</div>
<div style="left:12px;top:648px;width:41px;height:1px;background:#a6a6a6"></div>
<div class="t" style="left:11px;top:626px;font-size:12.5px;color:#222;width:42px;text-align:center;">20</div>
<div style="left:12px;top:661px;width:41px;height:1px;background:#a6a6a6"></div>
<div class="t" style="left:11px;top:649px;font-size:12.5px;color:#222;width:42px;text-align:center;">21</div>
<div style="left:12px;top:668px;width:41px;height:1px;background:#a6a6a6"></div>
<div class="t" style="left:11px;top:660px;font-size:12.5px;color:#222;width:42px;text-align:center;">22</div>
<div style="left:12px;top:685px;width:41px;height:1px;background:#a6a6a6"></div>
<div class="t" style="left:11px;top:671px;font-size:12.5px;color:#222;width:42px;text-align:center;">23</div>
<div style="left:12px;top:698px;width:41px;height:1px;background:#a6a6a6"></div>
<div class="t" style="left:11px;top:686px;font-size:12.5px;color:#222;width:42px;text-align:center;">24</div>
<div style="left:12px;top:715px;width:41px;height:1px;background:#a6a6a6"></div>
<div class="t" style="left:11px;top:701px;font-size:12.5px;color:#222;width:42px;text-align:center;">25</div>
<div style="left:12px;top:728px;width:41px;height:1px;background:#a6a6a6"></div>
<div class="t" style="left:11px;top:716px;font-size:12.5px;color:#222;width:42px;text-align:center;">26</div>
<div style="left:12px;top:735px;width:41px;height:1px;background:#a6a6a6"></div>
<div class="t" style="left:11px;top:727px;font-size:12.5px;color:#222;width:42px;text-align:center;">27</div>
<div style="left:12px;top:752px;width:41px;height:1px;background:#a6a6a6"></div>
<div class="t" style="left:11px;top:738px;font-size:12.5px;color:#222;width:42px;text-align:center;">28</div>
<div style="left:12px;top:849px;width:41px;height:1px;background:#a6a6a6"></div>
<div class="t" style="left:11px;top:795px;font-size:12.5px;color:#222;width:42px;text-align:center;">29</div>
<div style="left:12px;top:862px;width:41px;height:1px;background:#a6a6a6"></div>
<div class="t" style="left:11px;top:850px;font-size:12.5px;color:#222;width:42px;text-align:center;">30</div>
<div style="left:12px;top:879px;width:41px;height:1px;background:#a6a6a6"></div>
<div class="t" style="left:11px;top:865px;font-size:12.5px;color:#222;width:42px;text-align:center;">31</div>
<div style="left:12px;top:886px;width:41px;height:1px;background:#a6a6a6"></div>
<div class="t" style="left:11px;top:878px;font-size:12.5px;color:#222;width:42px;text-align:center;">32</div>
<div style="left:12px;top:903px;width:41px;height:1px;background:#a6a6a6"></div>
<div class="t" style="left:11px;top:889px;font-size:12.5px;color:#222;width:42px;text-align:center;">33</div>
<div style="left:12px;top:920px;width:41px;height:1px;background:#a6a6a6"></div>
<div class="t" style="left:11px;top:906px;font-size:12.5px;color:#222;width:42px;text-align:center;">34</div>
<div style="left:12px;top:933px;width:41px;height:1px;background:#a6a6a6"></div>
<div class="t" style="left:11px;top:921px;font-size:12.5px;color:#222;width:42px;text-align:center;">35</div>
<div style="left:12px;top:950px;width:41px;height:1px;background:#a6a6a6"></div>
<div class="t" style="left:11px;top:936px;font-size:12.5px;color:#222;width:42px;text-align:center;">36</div>
<div class="t" style="left:11px;top:986px;font-size:12.5px;color:#222;width:42px;text-align:center;">37</div>
<div style="left:12px;top:235px;width:41px;height:1px;background:#fff"></div>
<div style="left:12px;top:234px;width:41px;height:1px;background:#a6a6a6"></div>
<div style="left:12px;top:362px;width:41px;height:1px;background:#fff"></div>
<div style="left:12px;top:361px;width:41px;height:1px;background:#a6a6a6"></div>
<div style="left:12px;top:570px;width:41px;height:1px;background:#fff"></div>
<div style="left:12px;top:569px;width:41px;height:1px;background:#a6a6a6"></div>
<div style="left:12px;top:669px;width:41px;height:1px;background:#fff"></div>
<div style="left:12px;top:668px;width:41px;height:1px;background:#a6a6a6"></div>
<div style="left:12px;top:736px;width:41px;height:1px;background:#fff"></div>
<div style="left:12px;top:735px;width:41px;height:1px;background:#a6a6a6"></div>
<div style="left:12px;top:887px;width:41px;height:1px;background:#fff"></div>
<div style="left:12px;top:886px;width:41px;height:1px;background:#a6a6a6"></div>
<div class="t" style="left:65px;top:191px;font-size:12.4px;color:#1a1a1a;">Универсальный</div>
<div class="t" style="left:65px;top:206px;font-size:12.4px;color:#1a1a1a;">передаточный</div>
<div class="t" style="left:65px;top:221px;font-size:12.4px;color:#1a1a1a;">документ</div>
<div style="left:163px;top:161px;width:2px;height:501px;background:#111"></div>
<div class="t" style="left:174px;top:180px;font-size:12px;color:#1a1a1a;">Счет-фактура №</div>
<div class="t" style="left:174px;top:212px;font-size:12px;color:#1a1a1a;">Исправление №</div>
<div style="left:316px;top:193px;width:135px;height:1px;background:#1a1a1a"></div>
<div style="left:486px;top:193px;width:167px;height:1px;background:#1a1a1a"></div>
<div style="left:316px;top:225px;width:135px;height:1px;background:#1a1a1a"></div>
<div style="left:486px;top:225px;width:167px;height:1px;background:#1a1a1a"></div>
<div class="t" style="left:316px;top:180px;font-size:12px;color:#1a1a1a;width:135px;text-align:center;">---</div>
<div class="t" style="left:451px;top:180px;font-size:12px;color:#1a1a1a;width:35px;text-align:center;">от</div>
<div class="t" style="left:486px;top:180px;font-size:12px;color:#1a1a1a;width:167px;text-align:center;">[Дата]</div>
<div class="t" style="left:653px;top:180px;font-size:12px;color:#1a1a1a;width:32px;text-align:center;">(1)</div>
<div class="t" style="left:316px;top:212px;font-size:12px;color:#1a1a1a;width:135px;text-align:center;">--</div>
<div class="t" style="left:451px;top:212px;font-size:12px;color:#1a1a1a;width:35px;text-align:center;">от</div>
<div class="t" style="left:486px;top:212px;font-size:12px;color:#1a1a1a;width:167px;text-align:center;">--</div>
<div class="t" style="left:653px;top:212px;font-size:12px;color:#1a1a1a;width:32px;text-align:center;">(1а)</div>
<svg style="left:690px;top:162px" width="350" height="66"><rect x="9.7" y="0" width="2.2" height="66" fill="#000"/><rect x="12.6" y="0" width="1.9" height="66" fill="#000"/><rect x="17.0" y="0" width="4.0" height="66" fill="#000"/><rect x="23.3" y="0" width="3.8" height="66" fill="#000"/><rect x="29.7" y="0" width="2.6" height="66" fill="#000"/><rect x="34.7" y="0" width="1.3" height="66" fill="#000"/><rect x="37.0" y="0" width="1.9" height="66" fill="#000"/><rect x="42.0" y="0" width="1.8" height="66" fill="#000"/><rect x="47.3" y="0" width="2.7" height="66" fill="#000"/><rect x="51.0" y="0" width="4.0" height="66" fill="#000"/><rect x="56.0" y="0" width="1.3" height="66" fill="#000"/><rect x="58.0" y="0" width="3.0" height="66" fill="#000"/><rect x="64.8" y="0" width="6.2" height="66" fill="#000"/><rect x="74.8" y="0" width="2.4" height="66" fill="#000"/><rect x="77.8" y="0" width="2.1" height="66" fill="#000"/><rect x="84.6" y="0" width="2.6" height="66" fill="#000"/><rect x="89.6" y="0" width="1.3" height="66" fill="#000"/><rect x="92.2" y="0" width="3.9" height="66" fill="#000"/><rect x="97.2" y="0" width="2.6" height="66" fill="#000"/><rect x="100.7" y="0" width="1.4" height="66" fill="#000"/><rect x="105.9" y="0" width="2.5" height="66" fill="#000"/><rect x="112.0" y="0" width="1.7" height="66" fill="#000"/><rect x="117.0" y="0" width="1.6" height="66" fill="#000"/><rect x="119.6" y="0" width="3.9" height="66" fill="#000"/><rect x="127.0" y="0" width="1.0" height="66" fill="#000"/><rect x="128.8" y="0" width="3.1" height="66" fill="#000"/><rect x="132.9" y="0" width="6.3" height="66" fill="#000"/><rect x="139.7" y="0" width="2.2" height="66" fill="#000"/><rect x="142.9" y="0" width="2.9" height="66" fill="#000"/><rect x="146.9" y="0" width="3.9" height="66" fill="#000"/><rect x="152.1" y="0" width="1.3" height="66" fill="#000"/><rect x="154.5" y="0" width="2.6" height="66" fill="#000"/><rect x="160.8" y="0" width="1.5" height="66" fill="#000"/><rect x="164.8" y="0" width="1.2" height="66" fill="#000"/><rect x="167.0" y="0" width="2.9" height="66" fill="#000"/><rect x="174.2" y="0" width="5.8" height="66" fill="#000"/><rect x="180.0" y="0" width="3.1" height="66" fill="#000"/><rect x="183.3" y="0" width="1.2" height="66" fill="#000"/><rect x="184.7" y="0" width="2.1" height="66" fill="#000"/><rect x="188.0" y="0" width="3.0" height="66" fill="#000"/><rect x="194.2" y="0" width="1.8" height="66" fill="#000"/><rect x="197.1" y="0" width="1.5" height="66" fill="#000"/><rect x="202.0" y="0" width="1.6" height="66" fill="#000"/><rect x="205.7" y="0" width="2.7" height="66" fill="#000"/><rect x="212.0" y="0" width="1.6" height="66" fill="#000"/><rect x="215.7" y="0" width="1.4" height="66" fill="#000"/><rect x="217.8" y="0" width="3.2" height="66" fill="#000"/><rect x="223.0" y="0" width="1.8" height="66" fill="#000"/><rect x="229.2" y="0" width="1.8" height="66" fill="#000"/><rect x="234.4" y="0" width="2.6" height="66" fill="#000"/><rect x="239.1" y="0" width="1.8" height="66" fill="#000"/><rect x="243.0" y="0" width="2.1" height="66" fill="#000"/><rect x="245.7" y="0" width="5.2" height="66" fill="#000"/><rect x="254.0" y="0" width="1.6" height="66" fill="#000"/><rect x="256.7" y="0" width="3.1" height="66" fill="#000"/><rect x="262.0" y="0" width="1.3" height="66" fill="#000"/><rect x="266.9" y="0" width="1.7" height="66" fill="#000"/><rect x="270.7" y="0" width="2.8" height="66" fill="#000"/><rect x="275.6" y="0" width="1.6" height="66" fill="#000"/><rect x="281.9" y="0" width="1.1" height="66" fill="#000"/><rect x="283.5" y="0" width="4.7" height="66" fill="#000"/><rect x="289.3" y="0" width="1.5" height="66" fill="#000"/><rect x="291.9" y="0" width="5.2" height="66" fill="#000"/><rect x="298.0" y="0" width="1.8" height="66" fill="#000"/><rect x="301.9" y="0" width="4.2" height="66" fill="#000"/><rect x="308.2" y="0" width="2.6" height="66" fill="#000"/><rect x="311.9" y="0" width="5.2" height="66" fill="#000"/><rect x="321.8" y="0" width="1.6" height="66" fill="#000"/><rect x="325.5" y="0" width="2.6" height="66" fill="#000"/><rect x="331.8" y="0" width="4.0" height="66" fill="#000"/><rect x="337.0" y="0" width="1.1" height="66" fill="#000"/><rect x="339.2" y="0" width="3.1" height="66" fill="#000"/></svg>
<div class="t" style="left:1124px;top:177px;font-size:9.5px;color:#222;letter-spacing:0.55px">к постановлению Правительства Российской Федерации</div>
<div class="t" style="left:1264px;top:190px;font-size:9.5px;color:#222;letter-spacing:0.55px">от 26.12.2011 № 1137</div>
<div class="t" style="left:1074px;top:203px;font-size:9.5px;color:#222;letter-spacing:0.55px">(в редакции постановления Правительства Российской Федерации</div>
<div class="t" style="left:62px;top:254px;font-size:12.4px;color:#1a1a1a;width:59px;text-align:right;">Статус:</div>
<div style="left:123px;top:252px;width:28px;height:18px;border:2px solid #111"></div>
<div class="t" style="left:123px;top:254px;font-size:12.4px;color:#1a1a1a;width:28px;text-align:center;">1</div>
<div class="t" style="left:66px;top:288px;font-size:9.5px;color:#222;letter-spacing:0.55px">1 – счет-фактура и</div>
<div class="t" style="left:66px;top:301px;font-size:9.5px;color:#222;letter-spacing:0.55px">передаточный</div>
<div class="t" style="left:66px;top:314px;font-size:9.5px;color:#222;letter-spacing:0.55px">документ (акт)</div>
<div class="t" style="left:66px;top:327px;font-size:9.5px;color:#222;letter-spacing:0.55px">2 – передаточный</div>
<div class="t" style="left:66px;top:340px;font-size:9.5px;color:#222;letter-spacing:0.55px">документ (акт)</div>
<div class="t" style="left:172px;top:238px;font-size:12.2px;color:#1a1a1a;font-weight:bold">Продавец:</div>
<div class="t" style="left:390px;top:238px;font-size:12.2px;color:#1a1a1a;">[Головная организация.Наименование полное]</div>
<div style="left:387px;top:251px;width:451px;height:1px;background:#1a1a1a"></div>
<div class="t" style="left:838px;top:238px;font-size:12.2px;color:#1a1a1a;width:30px;text-align:center;">(2)</div>
<div class="t" style="left:171px;top:254px;font-size:12.2px;color:#1a1a1a;">Адрес:</div>
<div class="t" style="left:390px;top:254px;font-size:12.2px;color:#1a1a1a;">[Головная организация.Почтовый адрес]</div>
<div style="left:387px;top:268px;width:451px;height:1px;background:#1a1a1a"></div>
<div class="t" style="left:838px;top:254px;font-size:12.2px;color:#1a1a1a;width:30px;text-align:center;">(2а)</div>
<div class="t" style="left:171px;top:271px;font-size:12.2px;color:#1a1a1a;">ИНН/КПП продавца:</div>
<div class="t" style="left:390px;top:271px;font-size:12.2px;color:#1a1a1a;">[Головная организация.ИНН]/[Головная организация.КПП]</div>
<div style="left:387px;top:285px;width:451px;height:1px;background:#1a1a1a"></div>
<div class="t" style="left:838px;top:271px;font-size:12.2px;color:#1a1a1a;width:30px;text-align:center;">(2б)</div>
<div class="t" style="left:171px;top:288px;font-size:12.2px;color:#1a1a1a;">Грузоотправитель и его адрес:</div>
<div class="t" style="left:390px;top:288px;font-size:12.2px;color:#1a1a1a;">он же</div>
<div style="left:387px;top:302px;width:451px;height:1px;background:#1a1a1a"></div>
<div class="t" style="left:838px;top:288px;font-size:12.2px;color:#1a1a1a;width:30px;text-align:center;">(3)</div>
<div class="t" style="left:171px;top:305px;font-size:12.2px;color:#1a1a1a;">Грузополучатель и его адрес:</div>
<div class="t" style="left:390px;top:305px;font-size:12.2px;color:#1a1a1a;">[Контрагент.Наименование]</div>
<div style="left:387px;top:319px;width:451px;height:1px;background:#1a1a1a"></div>
<div class="t" style="left:838px;top:305px;font-size:12.2px;color:#1a1a1a;width:30px;text-align:center;">(4)</div>
<div class="t" style="left:171px;top:322px;font-size:12.2px;color:#1a1a1a;">К платежно-расчетному документу №</div>
<div class="t" style="left:390px;top:322px;font-size:12.2px;color:#1a1a1a;">-- от --</div>
<div style="left:387px;top:336px;width:451px;height:1px;background:#1a1a1a"></div>
<div class="t" style="left:838px;top:322px;font-size:12.2px;color:#1a1a1a;width:30px;text-align:center;">(5)</div>
<div class="t" style="left:171px;top:339px;font-size:12.2px;color:#1a1a1a;">Документ об отгрузке</div>
<div class="t" style="left:390px;top:339px;font-size:12.2px;color:#1a1a1a;">№ [Номер] от [Дата] г.</div>
<div style="left:387px;top:353px;width:451px;height:1px;background:#1a1a1a"></div>
<div class="t" style="left:838px;top:339px;font-size:12.2px;color:#1a1a1a;width:30px;text-align:center;">(5а)</div>
<div class="t" style="left:871px;top:238px;font-size:12.2px;color:#1a1a1a;font-weight:bold">Покупатель:</div>
<div class="t" style="left:1037px;top:238px;font-size:12.2px;color:#1a1a1a;">[Контрагент.Наименование]</div>
<div style="left:1034px;top:251px;width:236px;height:1px;background:#1a1a1a"></div>
<div class="t" style="left:871px;top:255px;font-size:12.2px;color:#1a1a1a;">Адрес:</div>
<div class="t" style="left:1037px;top:255px;font-size:12.2px;color:#1a1a1a;">[Контрагент.Адрес]</div>
<div style="left:1034px;top:268px;width:236px;height:1px;background:#1a1a1a"></div>
<div class="t" style="left:871px;top:272px;font-size:12.2px;color:#1a1a1a;">ИНН/КПП покупателя:</div>
<div class="t" style="left:1037px;top:272px;font-size:12.2px;color:#1a1a1a;">[Контрагент.ИНН]/[Контрагент.КПП]</div>
<div style="left:1034px;top:285px;width:236px;height:1px;background:#1a1a1a"></div>
<div class="t" style="left:871px;top:289px;font-size:12.2px;color:#1a1a1a;">Валюта: наименование, код</div>
<div class="t" style="left:1037px;top:289px;font-size:12.2px;color:#1a1a1a;">Российский рубль, 643</div>
<div style="left:1034px;top:302px;width:236px;height:1px;background:#1a1a1a"></div>
<div class="t" style="left:871px;top:307px;font-size:12.2px;color:#1a1a1a;">Идентификатор государственного контракта,</div>
<div class="t" style="left:871px;top:322px;font-size:12.2px;color:#1a1a1a;">договора (соглашения) (при наличии):</div>
<div style="left:1153px;top:336px;width:117px;height:1px;background:#1a1a1a"></div>
<div style="left:62px;top:361px;width:1208px;height:1px;background:#1a1a1a"></div>
<div style="left:62px;top:482px;width:1208px;height:1px;background:#1a1a1a"></div>
<div style="left:62px;top:500px;width:1208px;height:1px;background:#1a1a1a"></div>
<div style="left:62px;top:545px;width:1208px;height:1px;background:#1a1a1a"></div>
<div style="left:62px;top:562px;width:1208px;height:1px;background:#1a1a1a"></div>
<div style="left:62px;top:361px;width:1px;height:202px;background:#1a1a1a"></div>
<div style="left:198px;top:361px;width:1px;height:184px;background:#1a1a1a"></div>
<div style="left:388px;top:361px;width:1px;height:184px;background:#1a1a1a"></div>
<div style="left:456px;top:361px;width:1px;height:184px;background:#1a1a1a"></div>
<div style="left:554px;top:361px;width:1px;height:184px;background:#1a1a1a"></div>
<div style="left:623px;top:361px;width:1px;height:184px;background:#1a1a1a"></div>
<div style="left:720px;top:361px;width:1px;height:184px;background:#1a1a1a"></div>
<div style="left:829px;top:361px;width:1px;height:184px;background:#1a1a1a"></div>
<div style="left:879px;top:361px;width:1px;height:184px;background:#1a1a1a"></div>
<div style="left:954px;top:361px;width:1px;height:184px;background:#1a1a1a"></div>
<div style="left:1043px;top:361px;width:1px;height:184px;background:#1a1a1a"></div>
<div style="left:1150px;top:361px;width:1px;height:184px;background:#1a1a1a"></div>
<div style="left:486px;top:407px;width:1px;height:138px;background:#1a1a1a"></div>
<div style="left:1189px;top:407px;width:1px;height:138px;background:#1a1a1a"></div>
<div style="left:456px;top:406px;width:98px;height:1px;background:#1a1a1a"></div>
<div style="left:1150px;top:406px;width:120px;height:1px;background:#1a1a1a"></div>
<div style="left:720px;top:545px;width:1px;height:17px;background:#1a1a1a"></div>
<div style="left:829px;top:545px;width:1px;height:17px;background:#1a1a1a"></div>
<div style="left:954px;top:545px;width:1px;height:17px;background:#1a1a1a"></div>
<div style="left:1043px;top:545px;width:1px;height:17px;background:#1a1a1a"></div>
<div style="left:1150px;top:545px;width:1px;height:17px;background:#1a1a1a"></div>
<div class="t" style="left:62px;top:408px;font-size:12.4px;color:#1a1a1a;width:102px;text-align:center;">Код товара/</div>
<div class="t" style="left:62px;top:423px;font-size:12.4px;color:#1a1a1a;width:102px;text-align:center;">работ, услуг</div>
<div class="t" style="left:164px;top:408px;font-size:12.4px;color:#1a1a1a;width:34px;text-align:center;">№</div>
<div class="t" style="left:164px;top:423px;font-size:12.4px;color:#1a1a1a;width:34px;text-align:center;">п/п</div>
<div class="t" style="left:198px;top:393px;font-size:12.4px;color:#1a1a1a;width:190px;text-align:center;">Наименование товара</div>
<div class="t" style="left:198px;top:408px;font-size:12.4px;color:#1a1a1a;width:190px;text-align:center;">(описание выполненных работ,</div>
<div class="t" style="left:198px;top:423px;font-size:12.4px;color:#1a1a1a;width:190px;text-align:center;">оказанных услуг),</div>
<div class="t" style="left:198px;top:438px;font-size:12.4px;color:#1a1a1a;width:190px;text-align:center;">имущественного права</div>
<div class="t" style="left:388px;top:408px;font-size:12.4px;color:#1a1a1a;width:68px;text-align:center;">Код вида</div>
<div class="t" style="left:388px;top:423px;font-size:12.4px;color:#1a1a1a;width:68px;text-align:center;">товара</div>
<div class="t" style="left:456px;top:370px;font-size:12.4px;color:#1a1a1a;width:98px;text-align:center;">Единица</div>
<div class="t" style="left:456px;top:385px;font-size:12.4px;color:#1a1a1a;width:98px;text-align:center;">измерения</div>
<div class="t" style="left:456px;top:438px;font-size:12.4px;color:#1a1a1a;width:30px;text-align:center;">код</div>
<div class="t" style="left:486px;top:408px;font-size:12.4px;color:#1a1a1a;width:68px;text-align:center;">условное</div>
<div class="t" style="left:486px;top:423px;font-size:12.4px;color:#1a1a1a;width:68px;text-align:center;">обозна-</div>
<div class="t" style="left:486px;top:438px;font-size:12.4px;color:#1a1a1a;width:68px;text-align:center;">чение</div>
<div class="t" style="left:486px;top:453px;font-size:12.4px;color:#1a1a1a;width:68px;text-align:center;">(нацио-</div>
<div class="t" style="left:486px;top:468px;font-size:12.4px;color:#1a1a1a;width:68px;text-align:center;">нальное)</div>
<div class="t" style="left:554px;top:401px;font-size:12.4px;color:#1a1a1a;width:69px;text-align:center;">Коли-</div>
<div class="t" style="left:554px;top:416px;font-size:12.4px;color:#1a1a1a;width:69px;text-align:center;">чество</div>
<div class="t" style="left:554px;top:431px;font-size:12.4px;color:#1a1a1a;width:69px;text-align:center;">(объем)</div>
<div class="t" style="left:623px;top:394px;font-size:12.4px;color:#1a1a1a;width:97px;text-align:center;">Цена (тариф)</div>
<div class="t" style="left:623px;top:409px;font-size:12.4px;color:#1a1a1a;width:97px;text-align:center;">за</div>
<div class="t" style="left:623px;top:424px;font-size:12.4px;color:#1a1a1a;width:97px;text-align:center;">единицу</div>
<div class="t" style="left:623px;top:439px;font-size:12.4px;color:#1a1a1a;width:97px;text-align:center;">измерения</div>
<div class="t" style="left:720px;top:386px;font-size:12.4px;color:#1a1a1a;width:109px;text-align:center;">Стоимость</div>
<div class="t" style="left:720px;top:401px;font-size:12.4px;color:#1a1a1a;width:109px;text-align:center;">товаров (работ,</div>
<div class="t" style="left:720px;top:416px;font-size:12.4px;color:#1a1a1a;width:109px;text-align:center;">услуг), имущест-</div>
<div class="t" style="left:720px;top:431px;font-size:12.4px;color:#1a1a1a;width:109px;text-align:center;">венных прав без</div>
<div class="t" style="left:720px;top:446px;font-size:12.4px;color:#1a1a1a;width:109px;text-align:center;">налога - всего</div>
<div class="t" style="left:829px;top:394px;font-size:12.4px;color:#1a1a1a;width:50px;text-align:center;">В том</div>
<div class="t" style="left:829px;top:409px;font-size:12.4px;color:#1a1a1a;width:50px;text-align:center;">числе</div>
<div class="t" style="left:829px;top:424px;font-size:12.4px;color:#1a1a1a;width:50px;text-align:center;">сумма</div>
<div class="t" style="left:829px;top:439px;font-size:12.4px;color:#1a1a1a;width:50px;text-align:center;">акциза</div>
<div class="t" style="left:879px;top:408px;font-size:12.4px;color:#1a1a1a;width:75px;text-align:center;">Налоговая</div>
<div class="t" style="left:879px;top:423px;font-size:12.4px;color:#1a1a1a;width:75px;text-align:center;">ставка</div>
<div class="t" style="left:954px;top:386px;font-size:12.4px;color:#1a1a1a;width:89px;text-align:center;">Сумма</div>
<div class="t" style="left:954px;top:401px;font-size:12.4px;color:#1a1a1a;width:89px;text-align:center;">налога,</div>
<div class="t" style="left:954px;top:416px;font-size:12.4px;color:#1a1a1a;width:89px;text-align:center;">предъяв-</div>
<div class="t" style="left:954px;top:431px;font-size:12.4px;color:#1a1a1a;width:89px;text-align:center;">ляемая</div>
<div class="t" style="left:954px;top:446px;font-size:12.4px;color:#1a1a1a;width:89px;text-align:center;">покупателю</div>
<div class="t" style="left:1043px;top:386px;font-size:12.4px;color:#1a1a1a;width:107px;text-align:center;">Стоимость</div>
<div class="t" style="left:1043px;top:401px;font-size:12.4px;color:#1a1a1a;width:107px;text-align:center;">товаров (работ,</div>
<div class="t" style="left:1043px;top:416px;font-size:12.4px;color:#1a1a1a;width:107px;text-align:center;">услуг), имущест-</div>
<div class="t" style="left:1043px;top:431px;font-size:12.4px;color:#1a1a1a;width:107px;text-align:center;">венных прав с</div>
<div class="t" style="left:1043px;top:446px;font-size:12.4px;color:#1a1a1a;width:107px;text-align:center;">налогом - всего</div>
<div class="t" style="left:1150px;top:362px;font-size:12.4px;color:#1a1a1a;width:124px;text-align:center;">Страна</div>
<div class="t" style="left:1150px;top:377px;font-size:12.4px;color:#1a1a1a;width:124px;text-align:center;">происхождения</div>
<div class="t" style="left:1150px;top:392px;font-size:12.4px;color:#1a1a1a;width:124px;text-align:center;">товара</div>
<div class="t" style="left:1150px;top:416px;font-size:12.4px;color:#1a1a1a;width:39px;text-align:center;">циф-</div>
<div class="t" style="left:1150px;top:431px;font-size:12.4px;color:#1a1a1a;width:39px;text-align:center;">ро-</div>
<div class="t" style="left:1150px;top:446px;font-size:12.4px;color:#1a1a1a;width:39px;text-align:center;">вой</div>
<div class="t" style="left:1150px;top:461px;font-size:12.4px;color:#1a1a1a;width:39px;text-align:center;">код</div>
<div class="t" style="left:1189px;top:424px;font-size:12.4px;color:#1a1a1a;width:88px;text-align:center;">краткое</div>
<div class="t" style="left:1189px;top:439px;font-size:12.4px;color:#1a1a1a;width:88px;text-align:center;">наименова-</div>
<div class="t" style="left:1189px;top:454px;font-size:12.4px;color:#1a1a1a;width:88px;text-align:center;">ние</div>
<div class="t" style="left:62px;top:485px;font-size:12.4px;color:#1a1a1a;width:102px;text-align:center;">А</div>
<div class="t" style="left:164px;top:485px;font-size:12.4px;color:#1a1a1a;width:34px;text-align:center;">1</div>
<div class="t" style="left:198px;top:485px;font-size:12.4px;color:#1a1a1a;width:190px;text-align:center;">1а</div>
<div class="t" style="left:388px;top:485px;font-size:12.4px;color:#1a1a1a;width:68px;text-align:center;">1б</div>
<div class="t" style="left:456px;top:485px;font-size:12.4px;color:#1a1a1a;width:30px;text-align:center;">2</div>
<div class="t" style="left:486px;top:485px;font-size:12.4px;color:#1a1a1a;width:68px;text-align:center;">2а</div>
<div class="t" style="left:554px;top:485px;font-size:12.4px;color:#1a1a1a;width:69px;text-align:center;">3</div>
<div class="t" style="left:623px;top:485px;font-size:12.4px;color:#1a1a1a;width:97px;text-align:center;">4</div>
<div class="t" style="left:720px;top:485px;font-size:12.4px;color:#1a1a1a;width:109px;text-align:center;">5</div>
<div class="t" style="left:829px;top:485px;font-size:12.4px;color:#1a1a1a;width:50px;text-align:center;">6</div>
<div class="t" style="left:879px;top:485px;font-size:12.4px;color:#1a1a1a;width:75px;text-align:center;">7</div>
<div class="t" style="left:954px;top:485px;font-size:12.4px;color:#1a1a1a;width:89px;text-align:center;">8</div>
<div class="t" style="left:1043px;top:485px;font-size:12.4px;color:#1a1a1a;width:107px;text-align:center;">9</div>
<div class="t" style="left:1150px;top:485px;font-size:12.4px;color:#1a1a1a;width:39px;text-align:center;">10</div>
<div class="t" style="left:1189px;top:485px;font-size:12.4px;color:#1a1a1a;width:81px;text-align:center;">10а</div>
<div class="t" style="left:65px;top:502px;font-size:12.4px;color:#1a1a1a;">[Товары.Номенк</div>
<div class="t" style="left:65px;top:517px;font-size:12.4px;color:#1a1a1a;">латура.Код]</div>
<div class="t" style="left:164px;top:502px;font-size:12.4px;color:#1a1a1a;width:32px;text-align:right;">1</div>
<div class="t" style="left:201px;top:502px;font-size:12.4px;color:#1a1a1a;">[Товары.Номенклатура.Наимен</div>
<div class="t" style="left:201px;top:517px;font-size:12.4px;color:#1a1a1a;">ование для печати]</div>
<div class="t" style="left:391px;top:502px;font-size:12.4px;color:#1a1a1a;">--</div>
<div class="t" style="left:459px;top:502px;font-size:12.4px;color:#1a1a1a;">796</div>
<div class="t" style="left:489px;top:502px;font-size:12.4px;color:#1a1a1a;">шт</div>
<div class="t" style="left:554px;top:502px;font-size:12.4px;color:#1a1a1a;width:67px;text-align:right;">[Товары.Ко</div>
<div class="t" style="left:554px;top:517px;font-size:12.4px;color:#1a1a1a;width:67px;text-align:right;">личество]</div>
<div class="t" style="left:623px;top:502px;font-size:12.4px;color:#1a1a1a;width:95px;text-align:right;">[Товары.Цена]</div>
<div class="t" style="left:716px;top:502px;font-size:12.4px;color:#1a1a1a;width:110px;text-align:right;">[[Товары.Количес</div>
<div class="t" style="left:716px;top:517px;font-size:12.4px;color:#1a1a1a;width:110px;text-align:right;">тво]*[Товары.Цен</div>
<div class="t" style="left:716px;top:532px;font-size:12.4px;color:#1a1a1a;width:110px;text-align:right;">а]]</div>
<div class="t" style="left:1038px;top:502px;font-size:12.4px;color:#1a1a1a;width:110px;text-align:right;">[[Товары.Количес</div>
<div class="t" style="left:1038px;top:517px;font-size:12.4px;color:#1a1a1a;width:110px;text-align:right;">тво]*[Товары.Цен</div>
<div class="t" style="left:1038px;top:532px;font-size:12.4px;color:#1a1a1a;width:110px;text-align:right;">а]]</div>
<div class="t" style="left:832px;top:502px;font-size:12.4px;color:#1a1a1a;">без</div>
<div class="t" style="left:832px;top:517px;font-size:12.4px;color:#1a1a1a;">акциза</div>
<div class="t" style="left:882px;top:502px;font-size:12.4px;color:#1a1a1a;">20%</div>
<div class="t" style="left:954px;top:502px;font-size:12.4px;color:#1a1a1a;width:87px;text-align:right;">--</div>
<div class="t" style="left:1153px;top:502px;font-size:12.4px;color:#1a1a1a;">000</div>
<div class="t" style="left:1192px;top:502px;font-size:12.4px;color:#1a1a1a;">СТРАНА</div>
<div class="t" style="left:167px;top:548px;font-size:12px;color:#1a1a1a;font-weight:bold">Всего к оплате (9)</div>
<div class="t" style="left:720px;top:548px;font-size:12.4px;color:#1a1a1a;width:106px;text-align:right;">--</div>
<div class="t" style="left:829px;top:549px;font-size:12.4px;color:#1a1a1a;width:125px;text-align:center;font-weight:bold">Х</div>
<div class="t" style="left:954px;top:548px;font-size:12.4px;color:#1a1a1a;width:87px;text-align:right;">--</div>
<div class="t" style="left:1043px;top:548px;font-size:12.4px;color:#1a1a1a;width:105px;text-align:right;">--</div>
<div class="t" style="left:66px;top:573px;font-size:12.9px;color:#1a1a1a;">Документ</div>
<div class="t" style="left:66px;top:589px;font-size:12.9px;color:#1a1a1a;">составлен на 1</div>
<div class="t" style="left:66px;top:605px;font-size:12.9px;color:#1a1a1a;">листе</div>
<div class="t" style="left:186px;top:573px;font-size:12.9px;color:#1a1a1a;">Руководитель организации</div>
<div class="t" style="left:186px;top:589px;font-size:12.9px;color:#1a1a1a;">или иное уполномоченное лицо</div>
<div class="t" style="left:186px;top:619px;font-size:12.9px;color:#1a1a1a;">Индивидуальный предприниматель</div>
<div class="t" style="left:186px;top:635px;font-size:12.9px;color:#1a1a1a;">или иное уполномоченное лицо</div>
<div style="left:418px;top:602px;width:154px;height:1px;background:#1a1a1a"></div>
<div style="left:584px;top:602px;width:203px;height:1px;background:#1a1a1a"></div>
<div style="left:418px;top:648px;width:154px;height:1px;background:#1a1a1a"></div>
<div style="left:584px;top:648px;width:203px;height:1px;background:#1a1a1a"></div>
<div class="t" style="left:418px;top:604px;font-size:9.5px;color:#222;width:154px;text-align:center;letter-spacing:0.55px;margin-top:1px">(подпись)</div>
<div class="t" style="left:584px;top:604px;font-size:9.5px;color:#222;width:203px;text-align:center;letter-spacing:0.55px;margin-top:1px">(ф.и.о.)</div>
<div class="t" style="left:418px;top:650px;font-size:9.5px;color:#222;width:154px;text-align:center;letter-spacing:0.55px;margin-top:1px">(подпись)</div>
<div class="t" style="left:584px;top:650px;font-size:9.5px;color:#222;width:203px;text-align:center;letter-spacing:0.55px;margin-top:1px">(ф.и.о.)</div>
<div class="t" style="left:589px;top:573px;font-size:12.9px;color:#1a1a1a;">[Ссылка.Головная</div>
<div class="t" style="left:589px;top:589px;font-size:12.9px;color:#1a1a1a;">организация.Директор.ФИО.Фа</div>
<div class="t" style="left:802px;top:573px;font-size:12.9px;color:#1a1a1a;">Главный бухгалтер</div>
<div class="t" style="left:802px;top:589px;font-size:12.9px;color:#1a1a1a;">или иное уполномоченное лицо</div>
<div style="left:1002px;top:602px;width:156px;height:1px;background:#1a1a1a"></div>
<div class="t" style="left:1002px;top:604px;font-size:9.5px;color:#222;width:156px;text-align:center;letter-spacing:0.55px;margin-top:1px">(подпись)</div>
<div class="t" style="left:1174px;top:573px;font-size:12.9px;color:#1a1a1a;">[Головная организация.Главный</div>
<div class="t" style="left:1174px;top:589px;font-size:12.9px;color:#1a1a1a;">бухгалтер.ФИО.</div>
<div style="left:1170px;top:602px;width:100px;height:1px;background:#1a1a1a"></div>
<div style="left:842px;top:648px;width:428px;height:1px;background:#1a1a1a"></div>
<div class="t" style="left:885px;top:650px;font-size:9.5px;color:#222;letter-spacing:0.55px;margin-top:1px">(реквизиты свидетельства о государственной  регистрации индивидуального предпринимателя)</div>
<div style="left:163px;top:661px;width:1107px;height:2px;background:#111"></div>
<div class="t" style="left:136px;top:671px;font-size:13px;color:#1a1a1a;">Основание передачи (сдачи) / получения (приемки)</div>
<div style="left:447px;top:685px;width:823px;height:1px;background:#1a1a1a"></div>
<div class="t" style="left:447px;top:687px;font-size:9.5px;color:#222;width:945px;text-align:center;letter-spacing:0.55px;margin-top:1px">(договор; доверенность и др.)</div>
<div class="t" style="left:136px;top:701px;font-size:13px;color:#1a1a1a;">Данные о транспортировке и грузе</div>
<div style="left:368px;top:715px;width:902px;height:1px;background:#1a1a1a"></div>
<div class="t" style="left:368px;top:717px;font-size:9.5px;color:#222;letter-spacing:0.55px;margin-top:1px">транспортная накладная, поручение экспедитору, экспедиторская / складская расписка и др. / масса нетто/ брутто груза, если не приведены ссылки на транспортные документы, содержащие эти сведения</div>
<div class="t" style="left:136px;top:738px;font-size:13px;color:#1a1a1a;">Товар (груз) передал / услуги, результаты работ, права сдал</div>
<div class="t" style="left:922px;top:738px;font-size:13px;color:#1a1a1a;">Товар (груз) получил / услуги, результаты работ, права приняла</div>
<div style="left:841px;top:735px;width:2px;height:276px;background:#111"></div>
<div class="t" style="left:136px;top:819px;font-size:13px;color:#1a1a1a;">Старший</div>
<div class="t" style="left:136px;top:835px;font-size:13px;color:#1a1a1a;">кладовщик</div>
<div style="left:132px;top:849px;width:79px;height:1px;background:#1a1a1a"></div>
<div style="left:289px;top:849px;width:237px;height:1px;background:#1a1a1a"></div>
<div style="left:604px;top:849px;width:79px;height:1px;background:#1a1a1a"></div>
<div class="t" style="left:132px;top:851px;font-size:9.5px;color:#222;width:79px;text-align:center;letter-spacing:0.55px;margin-top:1px">(должность)</div>
<div class="t" style="left:289px;top:851px;font-size:9.5px;color:#222;width:237px;text-align:center;letter-spacing:0.55px;margin-top:1px">(подпись)</div>
<div class="t" style="left:604px;top:851px;font-size:9.5px;color:#222;width:79px;text-align:center;letter-spacing:0.55px;margin-top:1px">(ф.и.о.)</div>
<div class="t" style="left:608px;top:754px;font-size:13px;color:#1a1a1a;">[Головная</div>
<div class="t" style="left:608px;top:770px;font-size:13px;color:#1a1a1a;">организаци</div>
<div class="t" style="left:608px;top:786px;font-size:13px;color:#1a1a1a;">я.Главный</div>
<div class="t" style="left:608px;top:802px;font-size:13px;color:#1a1a1a;">бухгалтер.</div>
<div class="t" style="left:608px;top:818px;font-size:13px;color:#1a1a1a;">ФИО.Фами</div>
<div class="t" style="left:608px;top:834px;font-size:13px;color:#1a1a1a;">лия И. О.]</div>
<div class="t" style="left:683px;top:755px;font-size:13px;color:#1a1a1a;width:76px;text-align:right;">["[10]"]</div>
<div class="t" style="left:136px;top:865px;font-size:13px;color:#1a1a1a;">Дата отгрузки, передачи (сдачи)</div>
<div class="t" style="left:372px;top:865px;font-size:13px;color:#1a1a1a;">[Дата]</div>
<div style="left:368px;top:879px;width:158px;height:1px;background:#1a1a1a"></div>
<div class="t" style="left:683px;top:865px;font-size:13px;color:#1a1a1a;width:76px;text-align:right;">["[11]"]</div>
<div class="t" style="left:136px;top:889px;font-size:13px;color:#1a1a1a;">Иные сведения об отгрузке, передаче</div>
<div style="left:132px;top:920px;width:551px;height:1px;background:#1a1a1a"></div>
<div class="t" style="left:683px;top:907px;font-size:13px;color:#1a1a1a;width:76px;text-align:right;">["[12]"]</div>
<div class="t" style="left:132px;top:922px;font-size:9.5px;color:#222;width:551px;text-align:center;letter-spacing:0.55px;margin-top:1px">(ссылки на неотъемлемые приложения, сопутствующие документы, иные документы и т.п.)</div>
<div class="t" style="left:136px;top:936px;font-size:13px;color:#1a1a1a;">Ответственный за правильность оформления факта хозяйственной жизни</div>
<div class="t" style="left:608px;top:954px;font-size:13px;color:#1a1a1a;">[Головная</div>
<div class="t" style="left:608px;top:970px;font-size:13px;color:#1a1a1a;">организаци</div>
<div class="t" style="left:608px;top:986px;font-size:13px;color:#1a1a1a;">я.Директор.</div>
<div class="t" style="left:608px;top:1002px;font-size:13px;color:#1a1a1a;">ФИО.Фами</div>
<div class="t" style="left:683px;top:954px;font-size:13px;color:#1a1a1a;width:76px;text-align:right;">["[13]"]</div>
<div style="left:919px;top:849px;width:79px;height:1px;background:#1a1a1a"></div>
<div style="left:1077px;top:849px;width:158px;height:1px;background:#1a1a1a"></div>
<div class="t" style="left:919px;top:851px;font-size:9.5px;color:#222;width:79px;text-align:center;letter-spacing:0.55px;margin-top:1px">(должность)</div>
<div class="t" style="left:1077px;top:851px;font-size:9.5px;color:#222;width:158px;text-align:center;letter-spacing:0.55px;margin-top:1px">(подпись)</div>
<div class="t" style="left:922px;top:865px;font-size:13px;color:#1a1a1a;">Дата получе</div>
<div style="left:998px;top:864px;width:70px;height:14px;background:#fff"></div>
<div class="t" style="left:1081px;top:865px;font-size:13px;color:#1a1a1a;">«</div>
<div class="t" style="left:1109px;top:865px;font-size:13px;color:#1a1a1a;">»</div>
<div class="t" style="left:1198px;top:865px;font-size:13px;color:#1a1a1a;">20</div>
<div style="left:1077px;top:879px;width:158px;height:1px;background:#1a1a1a"></div>
<div class="t" style="left:922px;top:889px;font-size:13px;color:#1a1a1a;">Иные сведения о получении, приемке</div>
<div style="left:919px;top:920px;width:351px;height:1px;background:#1a1a1a"></div>
<div class="t" style="left:920px;top:922px;font-size:9.5px;color:#222;letter-spacing:0.55px;margin-top:1px">ция о наличии/отсутствии претензии; ссылки на неотъемлемые приложения, и другие документы и т.п.)</div>
<div class="t" style="left:922px;top:936px;font-size:13px;color:#1a1a1a;">Ответственный за правильность оформления факта хозяйственной жизни</div>
</div>
<div style="left:1273px;top:167px;width:8px;height:703px;background:#a3a3a3;border-radius:4px"></div>
<div style="left:1273px;top:870px;width:8px;height:117px;background:#d6d6d6;border-radius:4px"></div>
<svg style="left:1274px;top:153px" width="6" height="4" viewBox="0 0 6 4"><path d="M0 4 L3 0 L6 4 Z" fill="#c0c0c0"/></svg>
<svg style="left:1274px;top:998px" width="6" height="4" viewBox="0 0 6 4"><path d="M0 0 H6 L3 4 Z" fill="#444"/></svg>
<div style="left:34px;top:1014px;width:985px;height:7px;background:#9e9e9e;border-radius:4px"></div>
<div style="left:1015px;top:1014px;width:232px;height:7px;background:#d6d6d6;border-radius:4px"></div>
<svg style="left:20px;top:1015px" width="4" height="6" viewBox="0 0 4 6"><path d="M4 0 V6 L0 3 Z" fill="#c0c0c0"/></svg>
<svg style="left:1257px;top:1015px" width="4" height="6" viewBox="0 0 4 6"><path d="M0 0 V6 L4 3 Z" fill="#444"/></svg>
<div style="left:1284px;top:113px;width:1px;height:909px;background:#9a9a9a"></div>
<div style="left:1270px;top:143px;width:14px;height:1px;background:#a0a0a0"></div>
<div style="left:1295px;top:145px;width:358px;height:25px;border:1px solid #a8a8a8;border-radius:3px;background:#fff"></div>
<div class="t" style="left:1299px;top:152px;font-size:12.6px;color:#c4c4cc;">Найти поле...</div>
<svg style="left:1675px;top:154px" width="6" height="6" viewBox="0 0 6 6"><path d="M0.5 0.5 L5.5 5.5 M5.5 0.5 L0.5 5.5" stroke="#555" stroke-width="1.1"/></svg>
<div style="left:1295px;top:179px;width:398px;height:550px;border:1px solid #a9a9a9;background:#fff"></div>
<div style="left:1296px;top:180px;width:396px;height:29px;background:#f0f0f0"></div>
<div style="left:1296px;top:209px;width:396px;height:1px;background:#cfcfcf"></div>
<div style="left:1498px;top:180px;width:1px;height:29px;background:#dadada"></div>
<div style="left:1500px;top:180px;width:1px;height:29px;background:#dadada"></div>
<div style="left:1658px;top:180px;width:1px;height:29px;background:#dadada"></div>
<div style="left:1660px;top:180px;width:1px;height:29px;background:#dadada"></div>
<div class="t" style="left:1304px;top:189px;font-size:12.8px;color:#333;">Поле</div>
<div class="t" style="left:1508px;top:189px;font-size:12.8px;color:#333;">Образец</div>
<svg style="left:1667px;top:186px" width="17" height="16" viewBox="0 0 17 16"><g fill="none" stroke="#8a9aa8" stroke-width="1"><rect x="0.5" y="5.5" width="3" height="10"/><rect x="3.5" y="7.5" width="4" height="8"/><rect x="7.5" y="9.5" width="8" height="6"/><circle cx="11.5" cy="5" r="3"/></g><circle cx="11.5" cy="5" r="1" fill="#8a9aa8"/></svg>
<div style="left:1296px;top:210px;width:396px;height:30px;background:#fdf1c5"></div>
<div style="left:1345px;top:211px;width:60px;height:29px;background:#fde69b;border:2px solid #f7c71b"></div>
<svg style="left:1306px;top:220px" width="10" height="10" viewBox="0 0 10 10"><circle cx="5" cy="5" r="4.3" fill="none" stroke="#8c8c8c" stroke-width="0.9"/><path d="M5 2.3 V7.7 M2.3 5 H7.7" stroke="#777" stroke-width="0.9"/></svg>
<svg style="left:1328px;top:217px" width="7" height="16" viewBox="0 0 7 16"><path d="M1 1 L6.5 8 L1 15" fill="none" stroke="#8a8a8a" stroke-width="1.1"/></svg>
<div class="t" style="left:1349px;top:220px;font-size:12.6px;color:#333;">Образец</div>
<div class="t" style="left:1508px;top:220px;font-size:12.6px;color:#333;">Демо: Реализация то...</div>
<svg style="left:1306px;top:249px" width="10" height="10" viewBox="0 0 10 10"><circle cx="5" cy="5" r="4.3" fill="none" stroke="#8c8c8c" stroke-width="0.9"/><path d="M5 2.3 V7.7 M2.3 5 H7.7" stroke="#777" stroke-width="0.9"/></svg>
<svg style="left:1328px;top:246px" width="7" height="16" viewBox="0 0 7 16"><path d="M1 1 L6.5 8 L1 15" fill="none" stroke="#8a8a8a" stroke-width="1.1"/></svg>
<div class="t" style="left:1349px;top:249px;font-size:12.6px;color:#333;">Валюта</div>
<div class="t" style="left:1508px;top:249px;font-size:12.6px;color:#333;">RUB</div>
<svg style="left:1306px;top:278px" width="10" height="10" viewBox="0 0 10 10"><circle cx="5" cy="5" r="4.3" fill="none" stroke="#8c8c8c" stroke-width="0.9"/><path d="M5 2.3 V7.7 M2.3 5 H7.7" stroke="#777" stroke-width="0.9"/></svg>
<svg style="left:1328px;top:275px" width="7" height="16" viewBox="0 0 7 16"><path d="M1 1 L6.5 8 L1 15" fill="none" stroke="#8a8a8a" stroke-width="1.1"/></svg>
<div class="t" style="left:1349px;top:278px;font-size:12.6px;color:#333;">Головная организация</div>
<div class="t" style="left:1508px;top:278px;font-size:12.6px;color:#333;">Новые технологии ООО</div>
<svg style="left:1306px;top:307px" width="10" height="10" viewBox="0 0 10 10"><circle cx="5" cy="5" r="4.3" fill="none" stroke="#8c8c8c" stroke-width="0.9"/><path d="M5 2.3 V7.7 M2.3 5 H7.7" stroke="#777" stroke-width="0.9"/></svg>
<svg style="left:1326px;top:305px" width="13" height="13" viewBox="0 0 13 13"><rect x="0.5" y="2.5" width="11" height="10" fill="none" stroke="#8a8a8a"/><line x1="0.5" y1="5" x2="11.5" y2="5" stroke="#8a8a8a"/><line x1="3" y1="0" x2="3" y2="3" stroke="#8a8a8a"/><line x1="9" y1="0" x2="9" y2="3" stroke="#8a8a8a"/><g fill="#8a8a8a"><rect x="2" y="7" width="2" height="1.5"/><rect x="5" y="7" width="2" height="1.5"/><rect x="8" y="7" width="2" height="1.5"/><rect x="2" y="10" width="2" height="1.5"/><rect x="5" y="10" width="2" height="1.5"/></g></svg>
<div class="t" style="left:1349px;top:307px;font-size:12.6px;color:#333;">Дата</div>
<div class="t" style="left:1508px;top:307px;font-size:12.6px;color:#333;">13.02.2017</div>
<svg style="left:1667px;top:303px" width="17" height="16" viewBox="0 0 17 16"><g fill="none" stroke="#8a9aa8" stroke-width="1"><rect x="0.5" y="5.5" width="3" height="10"/><rect x="3.5" y="7.5" width="4" height="8"/><rect x="7.5" y="9.5" width="8" height="6"/><circle cx="11.5" cy="5" r="3"/></g><circle cx="11.5" cy="5" r="1" fill="#8a9aa8"/></svg>
<svg style="left:1306px;top:336px" width="10" height="10" viewBox="0 0 10 10"><circle cx="5" cy="5" r="4.3" fill="none" stroke="#8c8c8c" stroke-width="0.9"/><path d="M5 2.3 V7.7 M2.3 5 H7.7" stroke="#777" stroke-width="0.9"/></svg>
<svg style="left:1328px;top:333px" width="7" height="16" viewBox="0 0 7 16"><path d="M1 1 L6.5 8 L1 15" fill="none" stroke="#8a8a8a" stroke-width="1.1"/></svg>
<div class="t" style="left:1349px;top:336px;font-size:12.6px;color:#333;">Договор</div>
<div class="t" style="left:1508px;top:336px;font-size:12.6px;color:#333;">Договор Альфа с Нов...</div>
<div class="t" style="left:1326px;top:363px;font-size:15px;color:#8a8a8a;font-family:'Liberation Serif',serif">T</div>
<div class="t" style="left:1349px;top:365px;font-size:12.6px;color:#333;">Комментарий</div>
<svg style="left:1306px;top:394px" width="10" height="10" viewBox="0 0 10 10"><circle cx="5" cy="5" r="4.3" fill="none" stroke="#8c8c8c" stroke-width="0.9"/><path d="M5 2.3 V7.7 M2.3 5 H7.7" stroke="#777" stroke-width="0.9"/></svg>
<svg style="left:1328px;top:391px" width="7" height="16" viewBox="0 0 7 16"><path d="M1 1 L6.5 8 L1 15" fill="none" stroke="#8a8a8a" stroke-width="1.1"/></svg>
<div class="t" style="left:1349px;top:394px;font-size:12.6px;color:#333;">Контрагент</div>
<div class="t" style="left:1508px;top:394px;font-size:12.6px;color:#333;">ООО "Альфа"</div>
<svg style="left:1306px;top:423px" width="10" height="10" viewBox="0 0 10 10"><circle cx="5" cy="5" r="4.3" fill="none" stroke="#8c8c8c" stroke-width="0.9"/><path d="M5 2.3 V7.7 M2.3 5 H7.7" stroke="#777" stroke-width="0.9"/></svg>
<svg style="left:1328px;top:420px" width="7" height="16" viewBox="0 0 7 16"><path d="M1 1 L6.5 8 L1 15" fill="none" stroke="#8a8a8a" stroke-width="1.1"/></svg>
<div class="t" style="left:1349px;top:423px;font-size:12.6px;color:#333;">Место хранения</div>
<div class="t" style="left:1508px;top:423px;font-size:12.6px;color:#333;">Склад программ</div>
<svg style="left:1306px;top:452px" width="10" height="10" viewBox="0 0 10 10"><circle cx="5" cy="5" r="4.3" fill="none" stroke="#8c8c8c" stroke-width="0.9"/><path d="M5 2.3 V7.7 M2.3 5 H7.7" stroke="#777" stroke-width="0.9"/></svg>
<div class="t" style="left:1326px;top:450px;font-size:15px;color:#8a8a8a;font-family:'Liberation Serif',serif">T</div>
<div class="t" style="left:1349px;top:452px;font-size:12.6px;color:#333;">Номер</div>
<div class="t" style="left:1508px;top:452px;font-size:12.6px;color:#333;">А1</div>
<svg style="left:1306px;top:481px" width="10" height="10" viewBox="0 0 10 10"><circle cx="5" cy="5" r="4.3" fill="none" stroke="#8c8c8c" stroke-width="0.9"/><path d="M5 2.3 V7.7 M2.3 5 H7.7" stroke="#777" stroke-width="0.9"/></svg>
<svg style="left:1328px;top:478px" width="7" height="16" viewBox="0 0 7 16"><path d="M1 1 L6.5 8 L1 15" fill="none" stroke="#8a8a8a" stroke-width="1.1"/></svg>
<div class="t" style="left:1349px;top:481px;font-size:12.6px;color:#333;">Ответственный</div>
<svg style="left:1306px;top:510px" width="10" height="10" viewBox="0 0 10 10"><circle cx="5" cy="5" r="4.3" fill="none" stroke="#8c8c8c" stroke-width="0.9"/><path d="M5 2.3 V7.7 M2.3 5 H7.7" stroke="#777" stroke-width="0.9"/></svg>
<svg style="left:1328px;top:507px" width="7" height="16" viewBox="0 0 7 16"><path d="M1 1 L6.5 8 L1 15" fill="none" stroke="#8a8a8a" stroke-width="1.1"/></svg>
<div class="t" style="left:1349px;top:510px;font-size:12.6px;color:#333;">Партнер</div>
<div class="t" style="left:1508px;top:510px;font-size:12.6px;color:#333;">ООО "Альфа"</div>
<svg style="left:1306px;top:539px" width="10" height="10" viewBox="0 0 10 10"><circle cx="5" cy="5" r="4.3" fill="none" stroke="#8c8c8c" stroke-width="0.9"/><path d="M5 2.3 V7.7 M2.3 5 H7.7" stroke="#777" stroke-width="0.9"/></svg>
<svg style="left:1328px;top:536px" width="7" height="16" viewBox="0 0 7 16"><path d="M1 1 L6.5 8 L1 15" fill="none" stroke="#8a8a8a" stroke-width="1.1"/></svg>
<div class="t" style="left:1349px;top:539px;font-size:12.6px;color:#333;">Подразделение</div>
<svg style="left:1326px;top:567px" width="12" height="12" viewBox="0 0 12 12"><path d="M1 6.5 L4.5 10.5 L11 1" fill="none" stroke="#8a8a8a" stroke-width="1.1"/></svg>
<div class="t" style="left:1349px;top:568px;font-size:12.6px;color:#333;">Проведен</div>
<div class="t" style="left:1508px;top:568px;font-size:12.6px;color:#333;">Нет</div>
<svg style="left:1667px;top:564px" width="17" height="16" viewBox="0 0 17 16"><g fill="none" stroke="#8a9aa8" stroke-width="1"><rect x="0.5" y="5.5" width="3" height="10"/><rect x="3.5" y="7.5" width="4" height="8"/><rect x="7.5" y="9.5" width="8" height="6"/><circle cx="11.5" cy="5" r="3"/></g><circle cx="11.5" cy="5" r="1" fill="#8a9aa8"/></svg>
<svg style="left:1306px;top:597px" width="10" height="10" viewBox="0 0 10 10"><circle cx="5" cy="5" r="4.3" fill="none" stroke="#8c8c8c" stroke-width="0.9"/><path d="M5 2.3 V7.7 M2.3 5 H7.7" stroke="#777" stroke-width="0.9"/></svg>
<svg style="left:1325px;top:595px" width="14" height="14" viewBox="0 0 14 14"><g fill="none" stroke="#8a8a8a"><circle cx="2" cy="2" r="1.3"/><circle cx="2" cy="7" r="1.3"/><circle cx="2" cy="12" r="1.3"/><line x1="5" y1="2" x2="13" y2="2"/><line x1="5" y1="7" x2="13" y2="7"/><line x1="5" y1="12" x2="13" y2="12"/></g></svg>
<div class="t" style="left:1349px;top:597px;font-size:12.6px;color:#333;">Счета на оплату</div>
<svg style="left:1306px;top:626px" width="10" height="10" viewBox="0 0 10 10"><circle cx="5" cy="5" r="4.3" fill="none" stroke="#8c8c8c" stroke-width="0.9"/><path d="M5 2.3 V7.7 M2.3 5 H7.7" stroke="#777" stroke-width="0.9"/></svg>
<svg style="left:1325px;top:624px" width="14" height="14" viewBox="0 0 14 14"><g fill="none" stroke="#8a8a8a"><circle cx="2" cy="2" r="1.3"/><circle cx="2" cy="7" r="1.3"/><circle cx="2" cy="12" r="1.3"/><line x1="5" y1="2" x2="13" y2="2"/><line x1="5" y1="7" x2="13" y2="7"/><line x1="5" y1="12" x2="13" y2="12"/></g></svg>
<div class="t" style="left:1349px;top:626px;font-size:12.6px;color:#333;">Товары</div>
<svg style="left:1306px;top:655px" width="10" height="10" viewBox="0 0 10 10"><circle cx="5" cy="5" r="4.3" fill="none" stroke="#8c8c8c" stroke-width="0.9"/><path d="M5 2.3 V7.7 M2.3 5 H7.7" stroke="#777" stroke-width="0.9"/></svg>
<svg style="left:1323px;top:653px" width="15" height="14" viewBox="0 0 15 14"><path d="M0.5 0.5 H6 L7.5 2.5 H14.5 V13.5 H0.5 Z M0.5 4.5 H14.5" fill="none" stroke="#8a8a8a" stroke-width="1"/></svg>
<div class="t" style="left:1349px;top:655px;font-size:12.6px;color:#333;">Общие реквизиты</div>
<div style="left:1295px;top:737px;width:358px;height:25px;border:1px solid #a8a8a8;border-radius:3px;background:#fff"></div>
<div class="t" style="left:1299px;top:743px;font-size:12.6px;color:#c4c4cc;">Найти оператор или функцию...</div>
<svg style="left:1675px;top:747px" width="6" height="6" viewBox="0 0 6 6"><path d="M0.5 0.5 L5.5 5.5 M5.5 0.5 L0.5 5.5" stroke="#555" stroke-width="1.1"/></svg>
<div style="left:1295px;top:773px;width:398px;height:460px;border:1px solid #a9a9a9;background:#fff"></div>
<div style="left:1347px;top:774px;width:215px;height:28px;background:#fde38d"></div>
<svg style="left:1306px;top:783px" width="10" height="10" viewBox="0 0 10 10"><circle cx="5" cy="5" r="4.3" fill="none" stroke="#8c8c8c" stroke-width="0.9"/><path d="M5 2.3 V7.7 M2.3 5 H7.7" stroke="#777" stroke-width="0.9"/></svg>
<svg style="left:1323px;top:781px" width="15" height="14" viewBox="0 0 15 14"><path d="M0.5 0.5 H6 L7.5 2.5 H14.5 V13.5 H0.5 Z M0.5 4.5 H14.5" fill="none" stroke="#8a8a8a" stroke-width="1"/></svg>
<div class="t" style="left:1349px;top:783px;font-size:12.6px;color:#333;">Логические операторы и константы</div>
<svg style="left:1306px;top:812px" width="10" height="10" viewBox="0 0 10 10"><circle cx="5" cy="5" r="4.3" fill="none" stroke="#8c8c8c" stroke-width="0.9"/><path d="M5 2.3 V7.7 M2.3 5 H7.7" stroke="#777" stroke-width="0.9"/></svg>
<div class="t" style="left:1325px;top:810px;font-size:14px;color:#8a8a8a;font-family:'Liberation Serif',serif;font-style:italic">fx</div>
<div class="t" style="left:1349px;top:812px;font-size:12.6px;color:#333;">Числовые функции</div>
<svg style="left:1306px;top:841px" width="10" height="10" viewBox="0 0 10 10"><circle cx="5" cy="5" r="4.3" fill="none" stroke="#8c8c8c" stroke-width="0.9"/><path d="M5 2.3 V7.7 M2.3 5 H7.7" stroke="#777" stroke-width="0.9"/></svg>
<div class="t" style="left:1325px;top:839px;font-size:14px;color:#8a8a8a;font-family:'Liberation Serif',serif;font-style:italic">fx</div>
<div class="t" style="left:1349px;top:841px;font-size:12.6px;color:#333;">Строковые функции</div>
<svg style="left:1306px;top:870px" width="10" height="10" viewBox="0 0 10 10"><circle cx="5" cy="5" r="4.3" fill="none" stroke="#8c8c8c" stroke-width="0.9"/><path d="M5 2.3 V7.7 M2.3 5 H7.7" stroke="#777" stroke-width="0.9"/></svg>
<div class="t" style="left:1325px;top:868px;font-size:14px;color:#8a8a8a;font-family:'Liberation Serif',serif;font-style:italic">fx</div>
<div class="t" style="left:1349px;top:870px;font-size:12.6px;color:#333;">Функции для табличных частей</div>
<svg style="left:1306px;top:899px" width="10" height="10" viewBox="0 0 10 10"><circle cx="5" cy="5" r="4.3" fill="none" stroke="#8c8c8c" stroke-width="0.9"/><path d="M5 2.3 V7.7 M2.3 5 H7.7" stroke="#777" stroke-width="0.9"/></svg>
<div class="t" style="left:1325px;top:897px;font-size:14px;color:#8a8a8a;font-family:'Liberation Serif',serif;font-style:italic">fx</div>
<div class="t" style="left:1349px;top:899px;font-size:12.6px;color:#333;">Прочие функции</div>
<div style="left:4px;top:110.2px;width:1287px;height:917px;border:4.5px solid rgba(40,40,40,0.55);border-radius:6px;filter:blur(0.6px)"></div>
<div style="left:1289px;top:128.2px;width:417px;height:609px;border:4.5px solid rgba(40,40,40,0.55);border-radius:6px;filter:blur(0.6px)"></div>
<div style="left:1291px;top:761.2px;width:415px;height:228px;border:4.5px solid rgba(40,40,40,0.55);border-radius:6px;filter:blur(0.6px)"></div>
<div style="left:3px;top:109px;width:1287px;height:917px;border:4.5px solid #ee3a3d;border-radius:6px"></div>
<div style="left:1288px;top:127px;width:417px;height:609px;border:4.5px solid #ee3a3d;border-radius:6px"></div>
<div style="left:1290px;top:760px;width:415px;height:228px;border:4.5px solid #ee3a3d;border-radius:6px"></div>
<svg style="left:507px;top:107px" width="260" height="36"><text x="10" y="25" font-family="Liberation Sans" font-weight="bold" font-size="19" fill="#fff" stroke="#ee3a3d" stroke-width="5" stroke-linejoin="round" paint-order="stroke" style="filter:drop-shadow(1px 1.5px 1px rgba(80,0,0,0.45))">Поле редактора</text></svg>
<svg style="left:1399px;top:130px" width="260" height="36"><text x="10" y="25" font-family="Liberation Sans" font-weight="bold" font-size="19" fill="#fff" stroke="#ee3a3d" stroke-width="5" stroke-linejoin="round" paint-order="stroke" style="filter:drop-shadow(1px 1.5px 1px rgba(80,0,0,0.45))">Доступные поля</text></svg>
<svg style="left:1359px;top:940px" width="260" height="36"><text x="10" y="25" font-family="Liberation Sans" font-weight="bold" font-size="19" fill="#fff" stroke="#ee3a3d" stroke-width="5" stroke-linejoin="round" paint-order="stroke" style="filter:drop-shadow(1px 1.5px 1px rgba(80,0,0,0.45))">Доступные функции</text></svg>
</body></html>
